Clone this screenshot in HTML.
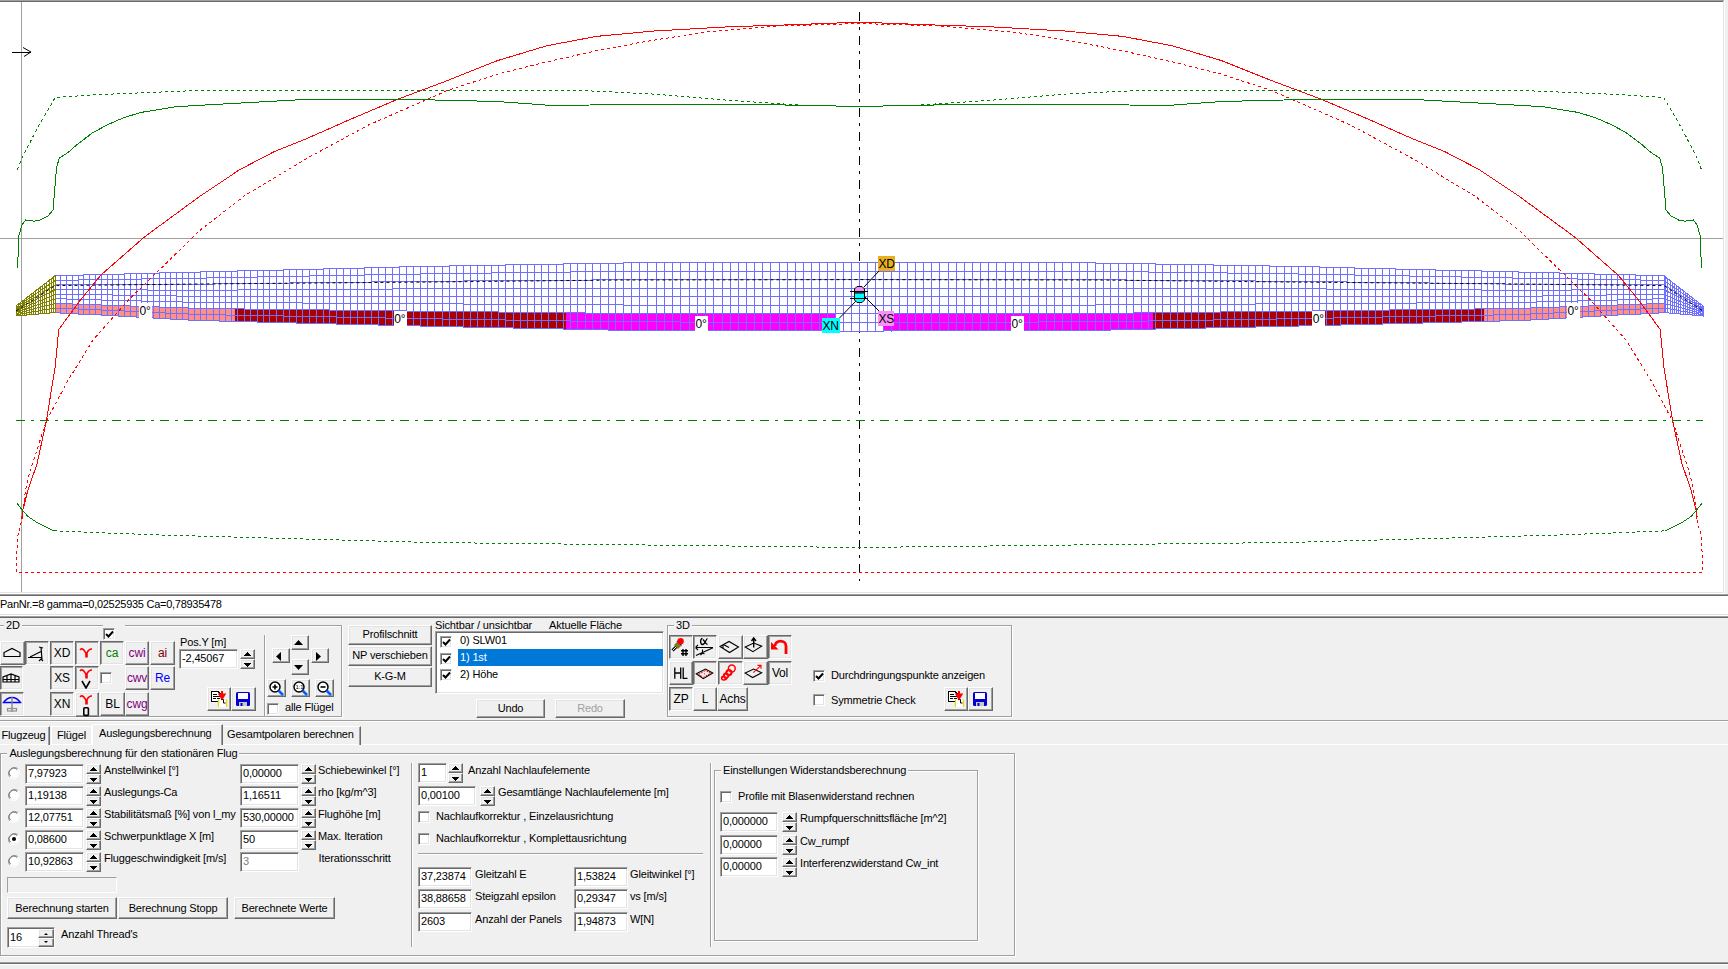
<!DOCTYPE html><html><head><meta charset="utf-8"><style>
*{margin:0;padding:0;box-sizing:border-box}
html,body{width:1728px;height:969px;overflow:hidden;background:#f0f0f0;font-family:"Liberation Sans",sans-serif;font-size:11px;line-height:13px;color:#000;position:relative;letter-spacing:-0.15px}
.t{position:absolute;white-space:pre;line-height:13px;letter-spacing:-0.15px}
.r{position:absolute}
.bt{position:absolute;background:#f0f0f0;border:1px solid;border-color:#fff #696969 #696969 #fff;box-shadow:inset -1px -1px #a0a0a0,inset 1px 1px #e3e3e3;text-align:center;white-space:pre}
.bs{position:absolute;background:#f0f0f0;border:1px solid;border-color:#696969 #fff #fff #696969;box-shadow:inset 1px 1px #a0a0a0,inset -1px -1px #e3e3e3;text-align:center;white-space:pre}
.ed{position:absolute;background:#fff;border:1px solid;border-color:#a0a0a0 #fff #fff #a0a0a0;box-shadow:inset 1px 1px #696969,inset -1px -1px #e3e3e3;white-space:pre;overflow:hidden}
.cb{position:absolute;background:#fff;border:1px solid;border-color:#a0a0a0 #fff #fff #a0a0a0;box-shadow:inset 1px 1px #696969,inset -1px -1px #e3e3e3}
.gb{position:absolute;border:1px solid #a0a0a0;box-shadow:1px 1px #fff, inset 1px 1px #fff}
.au,.ad{position:absolute;width:7px;height:4px}
.ic{position:absolute;left:0;top:0}
</style></head><body><div class="r" style="left:0px;top:0px;width:1728px;height:594px;background:#f0f0f0"></div>
<div class="r" style="left:0px;top:0px;width:1725px;height:594px;background:#fff"></div>
<svg width="1728" height="594" style="position:absolute;left:0;top:0">
<g shape-rendering="crispEdges">
<rect x="0" y="238" width="1723" height="1" fill="#a0a0a0"/>
<rect x="21" y="2" width="1" height="590" fill="#a0a0a0"/>
</g>
<path d="M859.5 12 V581" stroke="#000" stroke-width="1" fill="none" stroke-dasharray="9 6 3 6" shape-rendering="crispEdges"/>
<path d="M55.0 275.8 L200.0 272.0 L432.0 266.2 L620.0 263.0 L859.5 262.6 L1099.0 263.0 L1287.0 266.2 L1519.0 272.0 L1664.0 275.8 L1664.0 312.6 L1519.0 320.6 L1287.0 326.3 L1099.0 330.2 L859.5 331.1 L620.0 330.2 L432.0 326.3 L200.0 320.6 L55.0 312.6 Z" fill="#ffffff"/>
<path d="M55.0 303.4 L60.8 303.6 L66.6 303.8 L72.4 304.0 L78.2 304.2 L83.9 304.4 L89.7 304.6 L95.5 304.8 L101.3 305.0 L107.1 305.2 L112.9 305.4 L118.7 305.6 L124.5 305.8 L130.3 306.0 L136.0 306.2 L141.8 306.4 L147.6 306.6 L153.4 306.8 L159.2 307.0 L165.1 307.2 L170.9 307.4 L176.9 307.6 L182.8 307.8 L188.8 308.1 L194.8 308.3 L200.9 308.5 L207.0 308.5 L213.1 308.6 L219.3 308.7 L225.5 308.8 L231.7 308.8 L234.8 308.9 L234.8 321.5 L231.7 321.4 L225.5 321.2 L219.3 321.1 L213.1 320.9 L207.0 320.8 L200.9 320.6 L194.8 320.3 L188.8 320.0 L182.8 319.7 L176.9 319.3 L170.9 319.0 L165.1 318.7 L159.2 318.3 L153.4 318.0 L147.6 317.7 L141.8 317.4 L136.0 317.1 L130.3 316.8 L124.5 316.4 L118.7 316.1 L112.9 315.8 L107.1 315.5 L101.3 315.2 L95.5 314.8 L89.7 314.5 L83.9 314.2 L78.2 313.9 L72.4 313.6 L66.6 313.2 L60.8 312.9 L55.0 312.6 Z" fill="#ff9088"/>
<path d="M234.8 308.9 L238.0 308.9 L244.3 309.0 L250.7 309.1 L257.1 309.1 L263.5 309.2 L270.0 309.3 L276.5 309.4 L283.0 309.5 L289.6 309.5 L296.2 309.6 L302.9 309.7 L309.6 309.8 L316.4 309.9 L323.1 310.0 L330.0 310.0 L336.8 310.1 L343.8 310.2 L350.7 310.3 L357.7 310.4 L364.7 310.5 L371.7 310.5 L378.7 310.6 L385.7 310.7 L392.7 310.8 L399.8 310.9 L406.8 311.0 L413.8 311.1 L420.9 311.2 L427.9 311.2 L435.0 311.3 L442.1 311.4 L449.1 311.5 L456.2 311.6 L463.3 311.6 L470.4 311.7 L477.5 311.8 L484.6 311.9 L491.7 312.0 L498.8 312.0 L506.0 312.1 L513.1 312.2 L520.3 312.3 L527.4 312.4 L534.6 312.4 L541.7 312.5 L548.9 312.6 L556.1 312.7 L563.2 312.8 L566.0 312.8 L566.0 329.1 L563.2 329.0 L556.1 328.9 L548.9 328.7 L541.7 328.6 L534.6 328.4 L527.4 328.3 L520.3 328.1 L513.1 328.0 L506.0 327.8 L498.8 327.7 L491.7 327.5 L484.6 327.4 L477.5 327.2 L470.4 327.1 L463.3 326.9 L456.2 326.8 L449.1 326.7 L442.1 326.5 L435.0 326.4 L427.9 326.2 L420.9 326.0 L413.8 325.9 L406.8 325.7 L399.8 325.5 L392.7 325.3 L385.7 325.2 L378.7 325.0 L371.7 324.8 L364.7 324.6 L357.7 324.5 L350.7 324.3 L343.8 324.1 L336.8 324.0 L330.0 323.8 L323.1 323.6 L316.4 323.5 L309.6 323.3 L302.9 323.1 L296.2 323.0 L289.6 322.8 L283.0 322.6 L276.5 322.5 L270.0 322.3 L263.5 322.2 L257.1 322.0 L250.7 321.8 L244.3 321.7 L238.0 321.5 L234.8 321.5 Z" fill="#aa0000"/>
<path d="M566.0 312.8 L570.5 312.8 L577.8 312.9 L585.2 313.0 L592.7 313.1 L600.3 313.2 L608.0 313.3 L615.8 313.4 L623.7 313.4 L631.7 313.4 L639.7 313.4 L647.9 313.5 L656.2 313.5 L664.5 313.5 L672.7 313.5 L681.0 313.5 L689.2 313.6 L697.4 313.6 L705.6 313.6 L713.8 313.6 L722.0 313.6 L730.2 313.7 L738.4 313.7 L746.5 313.7 L754.7 313.7 L762.8 313.7 L770.9 313.8 L779.0 313.8 L787.1 313.8 L795.2 313.8 L803.3 313.8 L811.4 313.9 L819.4 313.9 L827.5 313.9 L835.5 313.9 L835.5 313.9 L835.5 331.0 L835.5 331.0 L827.5 331.0 L819.4 330.9 L811.4 330.9 L803.3 330.9 L795.2 330.9 L787.1 330.8 L779.0 330.8 L770.9 330.8 L762.8 330.7 L754.7 330.7 L746.5 330.7 L738.4 330.6 L730.2 330.6 L722.0 330.6 L713.8 330.6 L705.6 330.5 L697.4 330.5 L689.2 330.5 L681.0 330.4 L672.7 330.4 L664.5 330.4 L656.2 330.3 L647.9 330.3 L639.7 330.3 L631.7 330.2 L623.7 330.2 L615.8 330.1 L608.0 330.0 L600.3 329.8 L592.7 329.6 L585.2 329.5 L577.8 329.3 L570.5 329.2 L566.0 329.1 Z" fill="#ff00ff"/>
<path d="M1484.2 308.9 L1487.3 308.8 L1493.5 308.8 L1499.7 308.7 L1505.9 308.6 L1512.0 308.5 L1518.1 308.5 L1524.2 308.3 L1530.2 308.1 L1536.2 307.8 L1542.1 307.6 L1548.1 307.4 L1553.9 307.2 L1559.8 307.0 L1565.6 306.8 L1571.4 306.6 L1577.2 306.4 L1583.0 306.2 L1588.7 306.0 L1594.5 305.8 L1600.3 305.6 L1606.1 305.4 L1611.9 305.2 L1617.7 305.0 L1623.5 304.8 L1629.3 304.6 L1635.1 304.4 L1640.8 304.2 L1646.6 304.0 L1652.4 303.8 L1658.2 303.6 L1664.0 303.4 L1664.0 312.6 L1658.2 312.9 L1652.4 313.2 L1646.6 313.6 L1640.8 313.9 L1635.1 314.2 L1629.3 314.5 L1623.5 314.8 L1617.7 315.2 L1611.9 315.5 L1606.1 315.8 L1600.3 316.1 L1594.5 316.4 L1588.7 316.8 L1583.0 317.1 L1577.2 317.4 L1571.4 317.7 L1565.6 318.0 L1559.8 318.3 L1553.9 318.7 L1548.1 319.0 L1542.1 319.3 L1536.2 319.7 L1530.2 320.0 L1524.2 320.3 L1518.1 320.6 L1512.0 320.8 L1505.9 320.9 L1499.7 321.1 L1493.5 321.2 L1487.3 321.4 L1484.2 321.5 Z" fill="#ff9088"/>
<path d="M1153.0 312.8 L1155.8 312.8 L1162.9 312.7 L1170.1 312.6 L1177.3 312.5 L1184.4 312.4 L1191.6 312.4 L1198.7 312.3 L1205.9 312.2 L1213.0 312.1 L1220.2 312.0 L1227.3 312.0 L1234.4 311.9 L1241.5 311.8 L1248.6 311.7 L1255.7 311.6 L1262.8 311.6 L1269.9 311.5 L1276.9 311.4 L1284.0 311.3 L1291.1 311.2 L1298.1 311.2 L1305.2 311.1 L1312.2 311.0 L1319.2 310.9 L1326.3 310.8 L1333.3 310.7 L1340.3 310.6 L1347.3 310.5 L1354.3 310.5 L1361.3 310.4 L1368.3 310.3 L1375.2 310.2 L1382.2 310.1 L1389.0 310.0 L1395.9 310.0 L1402.6 309.9 L1409.4 309.8 L1416.1 309.7 L1422.8 309.6 L1429.4 309.5 L1436.0 309.5 L1442.5 309.4 L1449.0 309.3 L1455.5 309.2 L1461.9 309.1 L1468.3 309.1 L1474.7 309.0 L1481.0 308.9 L1484.2 308.9 L1484.2 321.5 L1481.0 321.5 L1474.7 321.7 L1468.3 321.8 L1461.9 322.0 L1455.5 322.2 L1449.0 322.3 L1442.5 322.5 L1436.0 322.6 L1429.4 322.8 L1422.8 323.0 L1416.1 323.1 L1409.4 323.3 L1402.6 323.5 L1395.9 323.6 L1389.0 323.8 L1382.2 324.0 L1375.2 324.1 L1368.3 324.3 L1361.3 324.5 L1354.3 324.6 L1347.3 324.8 L1340.3 325.0 L1333.3 325.2 L1326.3 325.3 L1319.2 325.5 L1312.2 325.7 L1305.2 325.9 L1298.1 326.0 L1291.1 326.2 L1284.0 326.4 L1276.9 326.5 L1269.9 326.7 L1262.8 326.8 L1255.7 326.9 L1248.6 327.1 L1241.5 327.2 L1234.4 327.4 L1227.3 327.5 L1220.2 327.7 L1213.0 327.8 L1205.9 328.0 L1198.7 328.1 L1191.6 328.3 L1184.4 328.4 L1177.3 328.6 L1170.1 328.7 L1162.9 328.9 L1155.8 329.0 L1153.0 329.1 Z" fill="#aa0000"/>
<path d="M883.5 313.9 L883.5 313.9 L891.5 313.9 L899.6 313.9 L907.6 313.9 L915.7 313.8 L923.8 313.8 L931.9 313.8 L940.0 313.8 L948.1 313.8 L956.2 313.7 L964.3 313.7 L972.5 313.7 L980.6 313.7 L988.8 313.7 L997.0 313.6 L1005.2 313.6 L1013.4 313.6 L1021.6 313.6 L1029.8 313.6 L1038.0 313.5 L1046.3 313.5 L1054.5 313.5 L1062.8 313.5 L1071.1 313.5 L1079.3 313.4 L1087.3 313.4 L1095.3 313.4 L1103.2 313.4 L1111.0 313.3 L1118.7 313.2 L1126.3 313.1 L1133.8 313.0 L1141.2 312.9 L1148.5 312.8 L1153.0 312.8 L1153.0 329.1 L1148.5 329.2 L1141.2 329.3 L1133.8 329.5 L1126.3 329.6 L1118.7 329.8 L1111.0 330.0 L1103.2 330.1 L1095.3 330.2 L1087.3 330.2 L1079.3 330.3 L1071.1 330.3 L1062.8 330.3 L1054.5 330.4 L1046.3 330.4 L1038.0 330.4 L1029.8 330.5 L1021.6 330.5 L1013.4 330.5 L1005.2 330.6 L997.0 330.6 L988.8 330.6 L980.6 330.6 L972.5 330.7 L964.3 330.7 L956.2 330.7 L948.1 330.8 L940.0 330.8 L931.9 330.8 L923.8 330.9 L915.7 330.9 L907.6 330.9 L899.6 330.9 L891.5 331.0 L883.5 331.0 L883.5 331.0 Z" fill="#ff00ff"/>
<path d="M54.5 275.8 V313.1 M60.5 275.6 V313.4 M66.5 275.5 V313.7 M72.5 275.3 V314.1 M78.5 275.2 V314.4 M83.5 275.0 V314.7 M89.5 274.9 V315.0 M95.5 274.7 V315.3 M101.5 274.6 V315.7 M107.5 274.4 V316.0 M112.5 274.3 V316.3 M118.5 274.1 V316.6 M124.5 274.0 V316.9 M130.5 273.8 V317.3 M136.5 273.7 V317.6 M141.5 273.5 V317.9 M147.5 273.4 V318.2 M153.5 273.2 V318.5 M159.5 273.1 V318.8 M165.5 272.9 V319.2 M170.5 272.8 V319.5 M176.5 272.6 V319.8 M182.5 272.4 V320.2 M188.5 272.3 V320.5 M194.5 272.1 V320.8 M200.5 272.0 V321.1 M206.5 271.8 V321.3 M213.5 271.7 V321.4 M219.5 271.5 V321.6 M225.5 271.4 V321.7 M231.5 271.2 V321.9 M237.5 271.1 V322.0 M244.5 270.9 V322.2 M250.5 270.7 V322.3 M257.5 270.6 V322.5 M263.5 270.4 V322.7 M269.5 270.3 V322.8 M276.5 270.1 V323.0 M283.5 269.9 V323.1 M289.5 269.8 V323.3 M296.5 269.6 V323.5 M302.5 269.4 V323.6 M309.5 269.3 V323.8 M316.5 269.1 V324.0 M323.5 268.9 V324.1 M329.5 268.8 V324.3 M336.5 268.6 V324.5 M343.5 268.4 V324.6 M350.5 268.3 V324.8 M357.5 268.1 V325.0 M364.5 267.9 V325.1 M371.5 267.7 V325.3 M378.5 267.6 V325.5 M385.5 267.4 V325.7 M392.5 267.2 V325.8 M399.5 267.0 V326.0 M406.5 266.9 V326.2 M413.5 266.7 V326.4 M420.5 266.5 V326.5 M427.5 266.4 V326.7 M434.5 266.2 V326.9 M442.5 266.1 V327.0 M449.5 266.0 V327.2 M456.5 265.8 V327.3 M463.5 265.7 V327.4 M470.5 265.6 V327.6 M477.5 265.5 V327.7 M484.5 265.3 V327.9 M491.5 265.2 V328.0 M498.5 265.1 V328.2 M505.5 265.0 V328.3 M513.5 264.8 V328.5 M520.5 264.7 V328.6 M527.5 264.6 V328.8 M534.5 264.5 V328.9 M541.5 264.4 V329.1 M548.5 264.2 V329.2 M556.5 264.1 V329.4 M563.5 264.0 V329.5 M570.5 263.9 V329.7 M577.5 263.7 V329.8 M585.5 263.6 V330.0 M592.5 263.5 V330.1 M600.5 263.3 V330.3 M608.5 263.2 V330.5 M615.5 263.1 V330.6 M623.5 263.0 V330.7 M631.5 263.0 V330.7 M639.5 263.0 V330.8 M647.5 263.0 V330.8 M656.5 262.9 V330.8 M664.5 262.9 V330.9 M672.5 262.9 V330.9 M680.5 262.9 V330.9 M689.5 262.9 V331.0 M697.5 262.9 V331.0 M705.5 262.9 V331.0 M713.5 262.8 V331.1 M722.5 262.8 V331.1 M730.5 262.8 V331.1 M738.5 262.8 V331.1 M746.5 262.8 V331.2 M754.5 262.8 V331.2 M762.5 262.8 V331.2 M770.5 262.7 V331.3 M779.5 262.7 V331.3 M787.5 262.7 V331.3 M795.5 262.7 V331.4 M803.5 262.7 V331.4 M811.5 262.7 V331.4 M819.5 262.7 V331.4 M827.5 262.7 V331.5 M835.5 262.6 V331.5 M843.5 262.6 V331.5 M851.5 262.6 V331.6 M859.5 262.6 V331.6 M867.5 262.6 V331.6 M875.5 262.6 V331.5 M883.5 262.6 V331.5 M891.5 262.7 V331.5 M899.5 262.7 V331.4 M907.5 262.7 V331.4 M915.5 262.7 V331.4 M923.5 262.7 V331.4 M931.5 262.7 V331.3 M939.5 262.7 V331.3 M948.5 262.7 V331.3 M956.5 262.8 V331.2 M964.5 262.8 V331.2 M972.5 262.8 V331.2 M980.5 262.8 V331.1 M988.5 262.8 V331.1 M996.5 262.8 V331.1 M1005.5 262.8 V331.1 M1013.5 262.9 V331.0 M1021.5 262.9 V331.0 M1029.5 262.9 V331.0 M1038.5 262.9 V330.9 M1046.5 262.9 V330.9 M1054.5 262.9 V330.9 M1062.5 262.9 V330.8 M1071.5 263.0 V330.8 M1079.5 263.0 V330.8 M1087.5 263.0 V330.7 M1095.5 263.0 V330.7 M1103.5 263.1 V330.6 M1110.5 263.2 V330.5 M1118.5 263.3 V330.3 M1126.5 263.5 V330.1 M1133.5 263.6 V330.0 M1141.5 263.7 V329.8 M1148.5 263.9 V329.7 M1155.5 264.0 V329.5 M1162.5 264.1 V329.4 M1170.5 264.2 V329.2 M1177.5 264.4 V329.1 M1184.5 264.5 V328.9 M1191.5 264.6 V328.8 M1198.5 264.7 V328.6 M1205.5 264.8 V328.5 M1213.5 265.0 V328.3 M1220.5 265.1 V328.2 M1227.5 265.2 V328.0 M1234.5 265.3 V327.9 M1241.5 265.5 V327.7 M1248.5 265.6 V327.6 M1255.5 265.7 V327.4 M1262.5 265.8 V327.3 M1269.5 266.0 V327.2 M1276.5 266.1 V327.0 M1284.5 266.2 V326.9 M1291.5 266.4 V326.7 M1298.5 266.5 V326.5 M1305.5 266.7 V326.4 M1312.5 266.9 V326.2 M1319.5 267.0 V326.0 M1326.5 267.2 V325.8 M1333.5 267.4 V325.7 M1340.5 267.6 V325.5 M1347.5 267.7 V325.3 M1354.5 267.9 V325.1 M1361.5 268.1 V325.0 M1368.5 268.3 V324.8 M1375.5 268.4 V324.6 M1382.5 268.6 V324.5 M1389.5 268.8 V324.3 M1395.5 268.9 V324.1 M1402.5 269.1 V324.0 M1409.5 269.3 V323.8 M1416.5 269.4 V323.6 M1422.5 269.6 V323.5 M1429.5 269.8 V323.3 M1435.5 269.9 V323.1 M1442.5 270.1 V323.0 M1449.5 270.3 V322.8 M1455.5 270.4 V322.7 M1461.5 270.6 V322.5 M1468.5 270.7 V322.3 M1474.5 270.9 V322.2 M1481.5 271.1 V322.0 M1487.5 271.2 V321.9 M1493.5 271.4 V321.7 M1499.5 271.5 V321.6 M1505.5 271.7 V321.4 M1512.5 271.8 V321.3 M1518.5 272.0 V321.1 M1524.5 272.1 V320.8 M1530.5 272.3 V320.5 M1536.5 272.4 V320.2 M1542.5 272.6 V319.8 M1548.5 272.8 V319.5 M1553.5 272.9 V319.2 M1559.5 273.1 V318.8 M1565.5 273.2 V318.5 M1571.5 273.4 V318.2 M1577.5 273.5 V317.9 M1582.5 273.7 V317.6 M1588.5 273.8 V317.3 M1594.5 274.0 V316.9 M1600.5 274.1 V316.6 M1606.5 274.3 V316.3 M1611.5 274.4 V316.0 M1617.5 274.6 V315.7 M1623.5 274.7 V315.3 M1629.5 274.9 V315.0 M1635.5 275.0 V314.7 M1640.5 275.2 V314.4 M1646.5 275.3 V314.1 M1652.5 275.5 V313.7 M1658.5 275.6 V313.4 M1664.5 275.8 V313.1 M54.0 275.5 H61.0 M60.0 275.5 H67.0 M66.0 275.5 H73.0 M72.0 275.5 H79.0 M78.0 275.5 H84.0 M83.0 274.5 H90.0 M89.0 274.5 H96.0 M95.0 274.5 H102.0 M101.0 274.5 H108.0 M107.0 274.5 H113.0 M112.0 274.5 H119.0 M118.0 274.5 H125.0 M124.0 273.5 H131.0 M130.0 273.5 H137.0 M136.0 273.5 H142.0 M141.0 273.5 H148.0 M147.0 273.5 H154.0 M153.0 273.5 H160.0 M159.0 272.5 H166.0 M165.0 272.5 H171.0 M170.0 272.5 H177.0 M176.0 272.5 H183.0 M182.0 272.5 H189.0 M188.0 272.5 H195.0 M194.0 272.5 H201.0 M200.0 271.5 H207.0 M206.0 271.5 H214.0 M213.0 271.5 H220.0 M219.0 271.5 H226.0 M225.0 271.5 H232.0 M231.0 271.5 H238.0 M237.0 270.5 H245.0 M244.0 270.5 H251.0 M250.0 270.5 H258.0 M257.0 270.5 H264.0 M263.0 270.5 H270.0 M269.0 270.5 H277.0 M276.0 270.5 H284.0 M283.0 269.5 H290.0 M289.0 269.5 H297.0 M296.0 269.5 H303.0 M302.0 269.5 H310.0 M309.0 269.5 H317.0 M316.0 269.5 H324.0 M323.0 268.5 H330.0 M329.0 268.5 H337.0 M336.0 268.5 H344.0 M343.0 268.5 H351.0 M350.0 268.5 H358.0 M357.0 268.5 H365.0 M364.0 267.5 H372.0 M371.0 267.5 H379.0 M378.0 267.5 H386.0 M385.0 267.5 H393.0 M392.0 267.5 H400.0 M399.0 266.5 H407.0 M406.0 266.5 H414.0 M413.0 266.5 H421.0 M420.0 266.5 H428.0 M427.0 266.5 H435.0 M434.0 266.5 H443.0 M442.0 266.5 H450.0 M449.0 265.5 H457.0 M456.0 265.5 H464.0 M463.0 265.5 H471.0 M470.0 265.5 H478.0 M477.0 265.5 H485.0 M484.0 265.5 H492.0 M491.0 265.5 H499.0 M498.0 265.5 H506.0 M505.0 264.5 H514.0 M513.0 264.5 H521.0 M520.0 264.5 H528.0 M527.0 264.5 H535.0 M534.0 264.5 H542.0 M541.0 264.5 H549.0 M548.0 264.5 H557.0 M556.0 264.5 H564.0 M563.0 263.5 H571.0 M570.0 263.5 H578.0 M577.0 263.5 H586.0 M585.0 263.5 H593.0 M592.0 263.5 H601.0 M600.0 263.5 H609.0 M608.0 263.5 H616.0 M615.0 263.5 H624.0 M623.0 262.5 H632.0 M631.0 262.5 H640.0 M639.0 262.5 H648.0 M647.0 262.5 H657.0 M656.0 262.5 H665.0 M664.0 262.5 H673.0 M672.0 262.5 H681.0 M680.0 262.5 H690.0 M689.0 262.5 H698.0 M697.0 262.5 H706.0 M705.0 262.5 H714.0 M713.0 262.5 H723.0 M722.0 262.5 H731.0 M730.0 262.5 H739.0 M738.0 262.5 H747.0 M746.0 262.5 H755.0 M754.0 262.5 H763.0 M762.0 262.5 H771.0 M770.0 262.5 H780.0 M779.0 262.5 H788.0 M787.0 262.5 H796.0 M795.0 262.5 H804.0 M803.0 262.5 H812.0 M811.0 262.5 H820.0 M819.0 262.5 H828.0 M827.0 262.5 H836.0 M835.0 262.5 H844.0 M843.0 262.5 H852.0 M851.0 262.5 H860.0 M859.0 262.5 H868.0 M867.0 262.5 H876.0 M875.0 262.5 H884.0 M883.0 262.5 H892.0 M891.0 262.5 H900.0 M899.0 262.5 H908.0 M907.0 262.5 H916.0 M915.0 262.5 H924.0 M923.0 262.5 H932.0 M931.0 262.5 H940.0 M939.0 262.5 H949.0 M948.0 262.5 H957.0 M956.0 262.5 H965.0 M964.0 262.5 H973.0 M972.0 262.5 H981.0 M980.0 262.5 H989.0 M988.0 262.5 H997.0 M996.0 262.5 H1006.0 M1005.0 262.5 H1014.0 M1013.0 262.5 H1022.0 M1021.0 262.5 H1030.0 M1029.0 262.5 H1039.0 M1038.0 262.5 H1047.0 M1046.0 262.5 H1055.0 M1054.0 262.5 H1063.0 M1062.0 262.5 H1072.0 M1071.0 262.5 H1080.0 M1079.0 262.5 H1088.0 M1087.0 262.5 H1096.0 M1095.0 263.5 H1104.0 M1103.0 263.5 H1111.0 M1110.0 263.5 H1119.0 M1118.0 263.5 H1127.0 M1126.0 263.5 H1134.0 M1133.0 263.5 H1142.0 M1141.0 263.5 H1149.0 M1148.0 263.5 H1156.0 M1155.0 264.5 H1163.0 M1162.0 264.5 H1171.0 M1170.0 264.5 H1178.0 M1177.0 264.5 H1185.0 M1184.0 264.5 H1192.0 M1191.0 264.5 H1199.0 M1198.0 264.5 H1206.0 M1205.0 264.5 H1214.0 M1213.0 265.5 H1221.0 M1220.0 265.5 H1228.0 M1227.0 265.5 H1235.0 M1234.0 265.5 H1242.0 M1241.0 265.5 H1249.0 M1248.0 265.5 H1256.0 M1255.0 265.5 H1263.0 M1262.0 265.5 H1270.0 M1269.0 266.5 H1277.0 M1276.0 266.5 H1285.0 M1284.0 266.5 H1292.0 M1291.0 266.5 H1299.0 M1298.0 266.5 H1306.0 M1305.0 266.5 H1313.0 M1312.0 266.5 H1320.0 M1319.0 267.5 H1327.0 M1326.0 267.5 H1334.0 M1333.0 267.5 H1341.0 M1340.0 267.5 H1348.0 M1347.0 267.5 H1355.0 M1354.0 268.5 H1362.0 M1361.0 268.5 H1369.0 M1368.0 268.5 H1376.0 M1375.0 268.5 H1383.0 M1382.0 268.5 H1390.0 M1389.0 268.5 H1396.0 M1395.0 269.5 H1403.0 M1402.0 269.5 H1410.0 M1409.0 269.5 H1417.0 M1416.0 269.5 H1423.0 M1422.0 269.5 H1430.0 M1429.0 269.5 H1436.0 M1435.0 270.5 H1443.0 M1442.0 270.5 H1450.0 M1449.0 270.5 H1456.0 M1455.0 270.5 H1462.0 M1461.0 270.5 H1469.0 M1468.0 270.5 H1475.0 M1474.0 270.5 H1482.0 M1481.0 271.5 H1488.0 M1487.0 271.5 H1494.0 M1493.0 271.5 H1500.0 M1499.0 271.5 H1506.0 M1505.0 271.5 H1513.0 M1512.0 271.5 H1519.0 M1518.0 272.5 H1525.0 M1524.0 272.5 H1531.0 M1530.0 272.5 H1537.0 M1536.0 272.5 H1543.0 M1542.0 272.5 H1549.0 M1548.0 272.5 H1554.0 M1553.0 272.5 H1560.0 M1559.0 273.5 H1566.0 M1565.0 273.5 H1572.0 M1571.0 273.5 H1578.0 M1577.0 273.5 H1583.0 M1582.0 273.5 H1589.0 M1588.0 273.5 H1595.0 M1594.0 274.5 H1601.0 M1600.0 274.5 H1607.0 M1606.0 274.5 H1612.0 M1611.0 274.5 H1618.0 M1617.0 274.5 H1624.0 M1623.0 274.5 H1630.0 M1629.0 274.5 H1636.0 M1635.0 275.5 H1641.0 M1640.0 275.5 H1647.0 M1646.0 275.5 H1653.0 M1652.0 275.5 H1659.0 M1658.0 275.5 H1665.0 M54.0 280.5 H61.0 M60.0 280.5 H67.0 M66.0 280.5 H73.0 M72.0 280.5 H79.0 M78.0 279.5 H84.0 M83.0 279.5 H90.0 M89.0 279.5 H96.0 M95.0 279.5 H102.0 M101.0 279.5 H108.0 M107.0 279.5 H113.0 M112.0 279.5 H119.0 M118.0 279.5 H125.0 M124.0 279.5 H131.0 M130.0 279.5 H137.0 M136.0 279.5 H142.0 M141.0 278.5 H148.0 M147.0 278.5 H154.0 M153.0 278.5 H160.0 M159.0 278.5 H166.0 M165.0 278.5 H171.0 M170.0 278.5 H177.0 M176.0 278.5 H183.0 M182.0 278.5 H189.0 M188.0 278.5 H195.0 M194.0 278.5 H201.0 M200.0 278.5 H207.0 M206.0 277.5 H214.0 M213.0 277.5 H220.0 M219.0 277.5 H226.0 M225.0 277.5 H232.0 M231.0 277.5 H238.0 M237.0 277.5 H245.0 M244.0 277.5 H251.0 M250.0 277.5 H258.0 M257.0 276.5 H264.0 M263.0 276.5 H270.0 M269.0 276.5 H277.0 M276.0 276.5 H284.0 M283.0 276.5 H290.0 M289.0 276.5 H297.0 M296.0 276.5 H303.0 M302.0 276.5 H310.0 M309.0 275.5 H317.0 M316.0 275.5 H324.0 M323.0 275.5 H330.0 M329.0 275.5 H337.0 M336.0 275.5 H344.0 M343.0 275.5 H351.0 M350.0 275.5 H358.0 M357.0 275.5 H365.0 M364.0 274.5 H372.0 M371.0 274.5 H379.0 M378.0 274.5 H386.0 M385.0 274.5 H393.0 M392.0 274.5 H400.0 M399.0 274.5 H407.0 M406.0 274.5 H414.0 M413.0 274.5 H421.0 M420.0 273.5 H428.0 M427.0 273.5 H435.0 M434.0 273.5 H443.0 M442.0 273.5 H450.0 M449.0 273.5 H457.0 M456.0 273.5 H464.0 M463.0 273.5 H471.0 M470.0 273.5 H478.0 M477.0 273.5 H485.0 M484.0 273.5 H492.0 M491.0 272.5 H499.0 M498.0 272.5 H506.0 M505.0 272.5 H514.0 M513.0 272.5 H521.0 M520.0 272.5 H528.0 M527.0 272.5 H535.0 M534.0 272.5 H542.0 M541.0 272.5 H549.0 M548.0 272.5 H557.0 M556.0 272.5 H564.0 M563.0 272.5 H571.0 M570.0 271.5 H578.0 M577.0 271.5 H586.0 M585.0 271.5 H593.0 M592.0 271.5 H601.0 M600.0 271.5 H609.0 M608.0 271.5 H616.0 M615.0 271.5 H624.0 M623.0 271.5 H632.0 M631.0 271.5 H640.0 M639.0 271.5 H648.0 M647.0 271.5 H657.0 M656.0 271.5 H665.0 M664.0 271.5 H673.0 M672.0 271.5 H681.0 M680.0 271.5 H690.0 M689.0 271.5 H698.0 M697.0 271.5 H706.0 M705.0 271.5 H714.0 M713.0 271.5 H723.0 M722.0 271.5 H731.0 M730.0 271.5 H739.0 M738.0 271.5 H747.0 M746.0 271.5 H755.0 M754.0 271.5 H763.0 M762.0 271.5 H771.0 M770.0 271.5 H780.0 M779.0 271.5 H788.0 M787.0 271.5 H796.0 M795.0 271.5 H804.0 M803.0 271.5 H812.0 M811.0 271.5 H820.0 M819.0 271.5 H828.0 M827.0 271.5 H836.0 M835.0 271.5 H844.0 M843.0 271.5 H852.0 M851.0 271.5 H860.0 M859.0 271.5 H868.0 M867.0 271.5 H876.0 M875.0 271.5 H884.0 M883.0 271.5 H892.0 M891.0 271.5 H900.0 M899.0 271.5 H908.0 M907.0 271.5 H916.0 M915.0 271.5 H924.0 M923.0 271.5 H932.0 M931.0 271.5 H940.0 M939.0 271.5 H949.0 M948.0 271.5 H957.0 M956.0 271.5 H965.0 M964.0 271.5 H973.0 M972.0 271.5 H981.0 M980.0 271.5 H989.0 M988.0 271.5 H997.0 M996.0 271.5 H1006.0 M1005.0 271.5 H1014.0 M1013.0 271.5 H1022.0 M1021.0 271.5 H1030.0 M1029.0 271.5 H1039.0 M1038.0 271.5 H1047.0 M1046.0 271.5 H1055.0 M1054.0 271.5 H1063.0 M1062.0 271.5 H1072.0 M1071.0 271.5 H1080.0 M1079.0 271.5 H1088.0 M1087.0 271.5 H1096.0 M1095.0 271.5 H1104.0 M1103.0 271.5 H1111.0 M1110.0 271.5 H1119.0 M1118.0 271.5 H1127.0 M1126.0 271.5 H1134.0 M1133.0 271.5 H1142.0 M1141.0 271.5 H1149.0 M1148.0 272.5 H1156.0 M1155.0 272.5 H1163.0 M1162.0 272.5 H1171.0 M1170.0 272.5 H1178.0 M1177.0 272.5 H1185.0 M1184.0 272.5 H1192.0 M1191.0 272.5 H1199.0 M1198.0 272.5 H1206.0 M1205.0 272.5 H1214.0 M1213.0 272.5 H1221.0 M1220.0 272.5 H1228.0 M1227.0 273.5 H1235.0 M1234.0 273.5 H1242.0 M1241.0 273.5 H1249.0 M1248.0 273.5 H1256.0 M1255.0 273.5 H1263.0 M1262.0 273.5 H1270.0 M1269.0 273.5 H1277.0 M1276.0 273.5 H1285.0 M1284.0 273.5 H1292.0 M1291.0 273.5 H1299.0 M1298.0 274.5 H1306.0 M1305.0 274.5 H1313.0 M1312.0 274.5 H1320.0 M1319.0 274.5 H1327.0 M1326.0 274.5 H1334.0 M1333.0 274.5 H1341.0 M1340.0 274.5 H1348.0 M1347.0 274.5 H1355.0 M1354.0 275.5 H1362.0 M1361.0 275.5 H1369.0 M1368.0 275.5 H1376.0 M1375.0 275.5 H1383.0 M1382.0 275.5 H1390.0 M1389.0 275.5 H1396.0 M1395.0 275.5 H1403.0 M1402.0 275.5 H1410.0 M1409.0 276.5 H1417.0 M1416.0 276.5 H1423.0 M1422.0 276.5 H1430.0 M1429.0 276.5 H1436.0 M1435.0 276.5 H1443.0 M1442.0 276.5 H1450.0 M1449.0 276.5 H1456.0 M1455.0 276.5 H1462.0 M1461.0 277.5 H1469.0 M1468.0 277.5 H1475.0 M1474.0 277.5 H1482.0 M1481.0 277.5 H1488.0 M1487.0 277.5 H1494.0 M1493.0 277.5 H1500.0 M1499.0 277.5 H1506.0 M1505.0 277.5 H1513.0 M1512.0 278.5 H1519.0 M1518.0 278.5 H1525.0 M1524.0 278.5 H1531.0 M1530.0 278.5 H1537.0 M1536.0 278.5 H1543.0 M1542.0 278.5 H1549.0 M1548.0 278.5 H1554.0 M1553.0 278.5 H1560.0 M1559.0 278.5 H1566.0 M1565.0 278.5 H1572.0 M1571.0 278.5 H1578.0 M1577.0 279.5 H1583.0 M1582.0 279.5 H1589.0 M1588.0 279.5 H1595.0 M1594.0 279.5 H1601.0 M1600.0 279.5 H1607.0 M1606.0 279.5 H1612.0 M1611.0 279.5 H1618.0 M1617.0 279.5 H1624.0 M1623.0 279.5 H1630.0 M1629.0 279.5 H1636.0 M1635.0 279.5 H1641.0 M1640.0 280.5 H1647.0 M1646.0 280.5 H1653.0 M1652.0 280.5 H1659.0 M1658.0 280.5 H1665.0 M54.0 284.5 H61.0 M60.0 284.5 H67.0 M66.0 284.5 H73.0 M72.0 284.5 H79.0 M78.0 284.5 H84.0 M83.0 284.5 H90.0 M89.0 284.5 H96.0 M95.0 284.5 H102.0 M101.0 284.5 H108.0 M107.0 284.5 H113.0 M112.0 284.5 H119.0 M118.0 284.5 H125.0 M124.0 284.5 H131.0 M130.0 284.5 H137.0 M136.0 284.5 H142.0 M141.0 284.5 H148.0 M147.0 284.5 H154.0 M153.0 284.5 H160.0 M159.0 284.5 H166.0 M165.0 284.5 H171.0 M170.0 284.5 H177.0 M176.0 284.5 H183.0 M182.0 284.5 H189.0 M188.0 284.5 H195.0 M194.0 284.5 H201.0 M200.0 284.5 H207.0 M206.0 284.5 H214.0 M213.0 283.5 H220.0 M219.0 283.5 H226.0 M225.0 283.5 H232.0 M231.0 283.5 H238.0 M237.0 283.5 H245.0 M244.0 283.5 H251.0 M250.0 283.5 H258.0 M257.0 283.5 H264.0 M263.0 283.5 H270.0 M269.0 283.5 H277.0 M276.0 283.5 H284.0 M283.0 283.5 H290.0 M289.0 282.5 H297.0 M296.0 282.5 H303.0 M302.0 282.5 H310.0 M309.0 282.5 H317.0 M316.0 282.5 H324.0 M323.0 282.5 H330.0 M329.0 282.5 H337.0 M336.0 282.5 H344.0 M343.0 282.5 H351.0 M350.0 282.5 H358.0 M357.0 282.5 H365.0 M364.0 282.5 H372.0 M371.0 281.5 H379.0 M378.0 281.5 H386.0 M385.0 281.5 H393.0 M392.0 281.5 H400.0 M399.0 281.5 H407.0 M406.0 281.5 H414.0 M413.0 281.5 H421.0 M420.0 281.5 H428.0 M427.0 281.5 H435.0 M434.0 281.5 H443.0 M442.0 281.5 H450.0 M449.0 281.5 H457.0 M456.0 281.5 H464.0 M463.0 280.5 H471.0 M470.0 280.5 H478.0 M477.0 280.5 H485.0 M484.0 280.5 H492.0 M491.0 280.5 H499.0 M498.0 280.5 H506.0 M505.0 280.5 H514.0 M513.0 280.5 H521.0 M520.0 280.5 H528.0 M527.0 280.5 H535.0 M534.0 280.5 H542.0 M541.0 280.5 H549.0 M548.0 280.5 H557.0 M556.0 280.5 H564.0 M563.0 280.5 H571.0 M570.0 280.5 H578.0 M577.0 280.5 H586.0 M585.0 280.5 H593.0 M592.0 279.5 H601.0 M600.0 279.5 H609.0 M608.0 279.5 H616.0 M615.0 279.5 H624.0 M623.0 279.5 H632.0 M631.0 279.5 H640.0 M639.0 279.5 H648.0 M647.0 279.5 H657.0 M656.0 279.5 H665.0 M664.0 279.5 H673.0 M672.0 279.5 H681.0 M680.0 279.5 H690.0 M689.0 279.5 H698.0 M697.0 279.5 H706.0 M705.0 279.5 H714.0 M713.0 279.5 H723.0 M722.0 279.5 H731.0 M730.0 279.5 H739.0 M738.0 279.5 H747.0 M746.0 279.5 H755.0 M754.0 279.5 H763.0 M762.0 279.5 H771.0 M770.0 279.5 H780.0 M779.0 279.5 H788.0 M787.0 279.5 H796.0 M795.0 279.5 H804.0 M803.0 279.5 H812.0 M811.0 279.5 H820.0 M819.0 279.5 H828.0 M827.0 279.5 H836.0 M835.0 279.5 H844.0 M843.0 279.5 H852.0 M851.0 279.5 H860.0 M859.0 279.5 H868.0 M867.0 279.5 H876.0 M875.0 279.5 H884.0 M883.0 279.5 H892.0 M891.0 279.5 H900.0 M899.0 279.5 H908.0 M907.0 279.5 H916.0 M915.0 279.5 H924.0 M923.0 279.5 H932.0 M931.0 279.5 H940.0 M939.0 279.5 H949.0 M948.0 279.5 H957.0 M956.0 279.5 H965.0 M964.0 279.5 H973.0 M972.0 279.5 H981.0 M980.0 279.5 H989.0 M988.0 279.5 H997.0 M996.0 279.5 H1006.0 M1005.0 279.5 H1014.0 M1013.0 279.5 H1022.0 M1021.0 279.5 H1030.0 M1029.0 279.5 H1039.0 M1038.0 279.5 H1047.0 M1046.0 279.5 H1055.0 M1054.0 279.5 H1063.0 M1062.0 279.5 H1072.0 M1071.0 279.5 H1080.0 M1079.0 279.5 H1088.0 M1087.0 279.5 H1096.0 M1095.0 279.5 H1104.0 M1103.0 279.5 H1111.0 M1110.0 279.5 H1119.0 M1118.0 279.5 H1127.0 M1126.0 280.5 H1134.0 M1133.0 280.5 H1142.0 M1141.0 280.5 H1149.0 M1148.0 280.5 H1156.0 M1155.0 280.5 H1163.0 M1162.0 280.5 H1171.0 M1170.0 280.5 H1178.0 M1177.0 280.5 H1185.0 M1184.0 280.5 H1192.0 M1191.0 280.5 H1199.0 M1198.0 280.5 H1206.0 M1205.0 280.5 H1214.0 M1213.0 280.5 H1221.0 M1220.0 280.5 H1228.0 M1227.0 280.5 H1235.0 M1234.0 280.5 H1242.0 M1241.0 280.5 H1249.0 M1248.0 280.5 H1256.0 M1255.0 281.5 H1263.0 M1262.0 281.5 H1270.0 M1269.0 281.5 H1277.0 M1276.0 281.5 H1285.0 M1284.0 281.5 H1292.0 M1291.0 281.5 H1299.0 M1298.0 281.5 H1306.0 M1305.0 281.5 H1313.0 M1312.0 281.5 H1320.0 M1319.0 281.5 H1327.0 M1326.0 281.5 H1334.0 M1333.0 281.5 H1341.0 M1340.0 281.5 H1348.0 M1347.0 282.5 H1355.0 M1354.0 282.5 H1362.0 M1361.0 282.5 H1369.0 M1368.0 282.5 H1376.0 M1375.0 282.5 H1383.0 M1382.0 282.5 H1390.0 M1389.0 282.5 H1396.0 M1395.0 282.5 H1403.0 M1402.0 282.5 H1410.0 M1409.0 282.5 H1417.0 M1416.0 282.5 H1423.0 M1422.0 282.5 H1430.0 M1429.0 283.5 H1436.0 M1435.0 283.5 H1443.0 M1442.0 283.5 H1450.0 M1449.0 283.5 H1456.0 M1455.0 283.5 H1462.0 M1461.0 283.5 H1469.0 M1468.0 283.5 H1475.0 M1474.0 283.5 H1482.0 M1481.0 283.5 H1488.0 M1487.0 283.5 H1494.0 M1493.0 283.5 H1500.0 M1499.0 283.5 H1506.0 M1505.0 284.5 H1513.0 M1512.0 284.5 H1519.0 M1518.0 284.5 H1525.0 M1524.0 284.5 H1531.0 M1530.0 284.5 H1537.0 M1536.0 284.5 H1543.0 M1542.0 284.5 H1549.0 M1548.0 284.5 H1554.0 M1553.0 284.5 H1560.0 M1559.0 284.5 H1566.0 M1565.0 284.5 H1572.0 M1571.0 284.5 H1578.0 M1577.0 284.5 H1583.0 M1582.0 284.5 H1589.0 M1588.0 284.5 H1595.0 M1594.0 284.5 H1601.0 M1600.0 284.5 H1607.0 M1606.0 284.5 H1612.0 M1611.0 284.5 H1618.0 M1617.0 284.5 H1624.0 M1623.0 284.5 H1630.0 M1629.0 284.5 H1636.0 M1635.0 284.5 H1641.0 M1640.0 284.5 H1647.0 M1646.0 284.5 H1653.0 M1652.0 284.5 H1659.0 M1658.0 284.5 H1665.0 M54.0 289.5 H61.0 M60.0 289.5 H67.0 M66.0 289.5 H73.0 M72.0 289.5 H79.0 M78.0 289.5 H84.0 M83.0 289.5 H90.0 M89.0 289.5 H96.0 M95.0 289.5 H102.0 M101.0 289.5 H108.0 M107.0 289.5 H113.0 M112.0 289.5 H119.0 M118.0 289.5 H125.0 M124.0 289.5 H131.0 M130.0 289.5 H137.0 M136.0 289.5 H142.0 M141.0 289.5 H148.0 M147.0 290.5 H154.0 M153.0 290.5 H160.0 M159.0 290.5 H166.0 M165.0 290.5 H171.0 M170.0 290.5 H177.0 M176.0 290.5 H183.0 M182.0 290.5 H189.0 M188.0 290.5 H195.0 M194.0 290.5 H201.0 M200.0 290.5 H207.0 M206.0 290.5 H214.0 M213.0 290.5 H220.0 M219.0 290.5 H226.0 M225.0 290.5 H232.0 M231.0 290.5 H238.0 M237.0 289.5 H245.0 M244.0 289.5 H251.0 M250.0 289.5 H258.0 M257.0 289.5 H264.0 M263.0 289.5 H270.0 M269.0 289.5 H277.0 M276.0 289.5 H284.0 M283.0 289.5 H290.0 M289.0 289.5 H297.0 M296.0 289.5 H303.0 M302.0 289.5 H310.0 M309.0 289.5 H317.0 M316.0 289.5 H324.0 M323.0 289.5 H330.0 M329.0 289.5 H337.0 M336.0 289.5 H344.0 M343.0 289.5 H351.0 M350.0 289.5 H358.0 M357.0 289.5 H365.0 M364.0 289.5 H372.0 M371.0 289.5 H379.0 M378.0 289.5 H386.0 M385.0 289.5 H393.0 M392.0 288.5 H400.0 M399.0 288.5 H407.0 M406.0 288.5 H414.0 M413.0 288.5 H421.0 M420.0 288.5 H428.0 M427.0 288.5 H435.0 M434.0 288.5 H443.0 M442.0 288.5 H450.0 M449.0 288.5 H457.0 M456.0 288.5 H464.0 M463.0 288.5 H471.0 M470.0 288.5 H478.0 M477.0 288.5 H485.0 M484.0 288.5 H492.0 M491.0 288.5 H499.0 M498.0 288.5 H506.0 M505.0 288.5 H514.0 M513.0 288.5 H521.0 M520.0 288.5 H528.0 M527.0 288.5 H535.0 M534.0 288.5 H542.0 M541.0 288.5 H549.0 M548.0 288.5 H557.0 M556.0 288.5 H564.0 M563.0 288.5 H571.0 M570.0 288.5 H578.0 M577.0 288.5 H586.0 M585.0 288.5 H593.0 M592.0 288.5 H601.0 M600.0 288.5 H609.0 M608.0 288.5 H616.0 M615.0 288.5 H624.0 M623.0 288.5 H632.0 M631.0 288.5 H640.0 M639.0 288.5 H648.0 M647.0 288.5 H657.0 M656.0 288.5 H665.0 M664.0 288.5 H673.0 M672.0 288.5 H681.0 M680.0 288.5 H690.0 M689.0 288.5 H698.0 M697.0 288.5 H706.0 M705.0 288.5 H714.0 M713.0 288.5 H723.0 M722.0 288.5 H731.0 M730.0 288.5 H739.0 M738.0 288.5 H747.0 M746.0 288.5 H755.0 M754.0 288.5 H763.0 M762.0 288.5 H771.0 M770.0 288.5 H780.0 M779.0 288.5 H788.0 M787.0 288.5 H796.0 M795.0 288.5 H804.0 M803.0 288.5 H812.0 M811.0 288.5 H820.0 M819.0 288.5 H828.0 M827.0 288.5 H836.0 M835.0 288.5 H844.0 M843.0 288.5 H852.0 M851.0 288.5 H860.0 M859.0 288.5 H868.0 M867.0 288.5 H876.0 M875.0 288.5 H884.0 M883.0 288.5 H892.0 M891.0 288.5 H900.0 M899.0 288.5 H908.0 M907.0 288.5 H916.0 M915.0 288.5 H924.0 M923.0 288.5 H932.0 M931.0 288.5 H940.0 M939.0 288.5 H949.0 M948.0 288.5 H957.0 M956.0 288.5 H965.0 M964.0 288.5 H973.0 M972.0 288.5 H981.0 M980.0 288.5 H989.0 M988.0 288.5 H997.0 M996.0 288.5 H1006.0 M1005.0 288.5 H1014.0 M1013.0 288.5 H1022.0 M1021.0 288.5 H1030.0 M1029.0 288.5 H1039.0 M1038.0 288.5 H1047.0 M1046.0 288.5 H1055.0 M1054.0 288.5 H1063.0 M1062.0 288.5 H1072.0 M1071.0 288.5 H1080.0 M1079.0 288.5 H1088.0 M1087.0 288.5 H1096.0 M1095.0 288.5 H1104.0 M1103.0 288.5 H1111.0 M1110.0 288.5 H1119.0 M1118.0 288.5 H1127.0 M1126.0 288.5 H1134.0 M1133.0 288.5 H1142.0 M1141.0 288.5 H1149.0 M1148.0 288.5 H1156.0 M1155.0 288.5 H1163.0 M1162.0 288.5 H1171.0 M1170.0 288.5 H1178.0 M1177.0 288.5 H1185.0 M1184.0 288.5 H1192.0 M1191.0 288.5 H1199.0 M1198.0 288.5 H1206.0 M1205.0 288.5 H1214.0 M1213.0 288.5 H1221.0 M1220.0 288.5 H1228.0 M1227.0 288.5 H1235.0 M1234.0 288.5 H1242.0 M1241.0 288.5 H1249.0 M1248.0 288.5 H1256.0 M1255.0 288.5 H1263.0 M1262.0 288.5 H1270.0 M1269.0 288.5 H1277.0 M1276.0 288.5 H1285.0 M1284.0 288.5 H1292.0 M1291.0 288.5 H1299.0 M1298.0 288.5 H1306.0 M1305.0 288.5 H1313.0 M1312.0 288.5 H1320.0 M1319.0 288.5 H1327.0 M1326.0 289.5 H1334.0 M1333.0 289.5 H1341.0 M1340.0 289.5 H1348.0 M1347.0 289.5 H1355.0 M1354.0 289.5 H1362.0 M1361.0 289.5 H1369.0 M1368.0 289.5 H1376.0 M1375.0 289.5 H1383.0 M1382.0 289.5 H1390.0 M1389.0 289.5 H1396.0 M1395.0 289.5 H1403.0 M1402.0 289.5 H1410.0 M1409.0 289.5 H1417.0 M1416.0 289.5 H1423.0 M1422.0 289.5 H1430.0 M1429.0 289.5 H1436.0 M1435.0 289.5 H1443.0 M1442.0 289.5 H1450.0 M1449.0 289.5 H1456.0 M1455.0 289.5 H1462.0 M1461.0 289.5 H1469.0 M1468.0 289.5 H1475.0 M1474.0 289.5 H1482.0 M1481.0 290.5 H1488.0 M1487.0 290.5 H1494.0 M1493.0 290.5 H1500.0 M1499.0 290.5 H1506.0 M1505.0 290.5 H1513.0 M1512.0 290.5 H1519.0 M1518.0 290.5 H1525.0 M1524.0 290.5 H1531.0 M1530.0 290.5 H1537.0 M1536.0 290.5 H1543.0 M1542.0 290.5 H1549.0 M1548.0 290.5 H1554.0 M1553.0 290.5 H1560.0 M1559.0 290.5 H1566.0 M1565.0 290.5 H1572.0 M1571.0 289.5 H1578.0 M1577.0 289.5 H1583.0 M1582.0 289.5 H1589.0 M1588.0 289.5 H1595.0 M1594.0 289.5 H1601.0 M1600.0 289.5 H1607.0 M1606.0 289.5 H1612.0 M1611.0 289.5 H1618.0 M1617.0 289.5 H1624.0 M1623.0 289.5 H1630.0 M1629.0 289.5 H1636.0 M1635.0 289.5 H1641.0 M1640.0 289.5 H1647.0 M1646.0 289.5 H1653.0 M1652.0 289.5 H1659.0 M1658.0 289.5 H1665.0 M54.0 294.5 H61.0 M60.0 294.5 H67.0 M66.0 294.5 H73.0 M72.0 294.5 H79.0 M78.0 294.5 H84.0 M83.0 294.5 H90.0 M89.0 294.5 H96.0 M95.0 294.5 H102.0 M101.0 294.5 H108.0 M107.0 294.5 H113.0 M112.0 295.5 H119.0 M118.0 295.5 H125.0 M124.0 295.5 H131.0 M130.0 295.5 H137.0 M136.0 295.5 H142.0 M141.0 295.5 H148.0 M147.0 295.5 H154.0 M153.0 295.5 H160.0 M159.0 295.5 H166.0 M165.0 295.5 H171.0 M170.0 295.5 H177.0 M176.0 296.5 H183.0 M182.0 296.5 H189.0 M188.0 296.5 H195.0 M194.0 296.5 H201.0 M200.0 296.5 H207.0 M206.0 296.5 H214.0 M213.0 296.5 H220.0 M219.0 296.5 H226.0 M225.0 296.5 H232.0 M231.0 296.5 H238.0 M237.0 296.5 H245.0 M244.0 296.5 H251.0 M250.0 296.5 H258.0 M257.0 296.5 H264.0 M263.0 296.5 H270.0 M269.0 296.5 H277.0 M276.0 296.5 H284.0 M283.0 296.5 H290.0 M289.0 296.5 H297.0 M296.0 296.5 H303.0 M302.0 296.5 H310.0 M309.0 296.5 H317.0 M316.0 296.5 H324.0 M323.0 296.5 H330.0 M329.0 296.5 H337.0 M336.0 296.5 H344.0 M343.0 296.5 H351.0 M350.0 296.5 H358.0 M357.0 296.5 H365.0 M364.0 296.5 H372.0 M371.0 296.5 H379.0 M378.0 296.5 H386.0 M385.0 296.5 H393.0 M392.0 296.5 H400.0 M399.0 296.5 H407.0 M406.0 296.5 H414.0 M413.0 296.5 H421.0 M420.0 296.5 H428.0 M427.0 296.5 H435.0 M434.0 296.5 H443.0 M442.0 296.5 H450.0 M449.0 296.5 H457.0 M456.0 296.5 H464.0 M463.0 296.5 H471.0 M470.0 296.5 H478.0 M477.0 296.5 H485.0 M484.0 296.5 H492.0 M491.0 296.5 H499.0 M498.0 296.5 H506.0 M505.0 296.5 H514.0 M513.0 296.5 H521.0 M520.0 296.5 H528.0 M527.0 296.5 H535.0 M534.0 296.5 H542.0 M541.0 296.5 H549.0 M548.0 296.5 H557.0 M556.0 296.5 H564.0 M563.0 296.5 H571.0 M570.0 296.5 H578.0 M577.0 296.5 H586.0 M585.0 296.5 H593.0 M592.0 296.5 H601.0 M600.0 296.5 H609.0 M608.0 296.5 H616.0 M615.0 296.5 H624.0 M623.0 296.5 H632.0 M631.0 296.5 H640.0 M639.0 296.5 H648.0 M647.0 296.5 H657.0 M656.0 296.5 H665.0 M664.0 296.5 H673.0 M672.0 296.5 H681.0 M680.0 296.5 H690.0 M689.0 296.5 H698.0 M697.0 296.5 H706.0 M705.0 296.5 H714.0 M713.0 296.5 H723.0 M722.0 296.5 H731.0 M730.0 296.5 H739.0 M738.0 296.5 H747.0 M746.0 296.5 H755.0 M754.0 296.5 H763.0 M762.0 296.5 H771.0 M770.0 296.5 H780.0 M779.0 296.5 H788.0 M787.0 296.5 H796.0 M795.0 296.5 H804.0 M803.0 296.5 H812.0 M811.0 296.5 H820.0 M819.0 296.5 H828.0 M827.0 296.5 H836.0 M835.0 296.5 H844.0 M843.0 296.5 H852.0 M851.0 296.5 H860.0 M859.0 296.5 H868.0 M867.0 296.5 H876.0 M875.0 296.5 H884.0 M883.0 296.5 H892.0 M891.0 296.5 H900.0 M899.0 296.5 H908.0 M907.0 296.5 H916.0 M915.0 296.5 H924.0 M923.0 296.5 H932.0 M931.0 296.5 H940.0 M939.0 296.5 H949.0 M948.0 296.5 H957.0 M956.0 296.5 H965.0 M964.0 296.5 H973.0 M972.0 296.5 H981.0 M980.0 296.5 H989.0 M988.0 296.5 H997.0 M996.0 296.5 H1006.0 M1005.0 296.5 H1014.0 M1013.0 296.5 H1022.0 M1021.0 296.5 H1030.0 M1029.0 296.5 H1039.0 M1038.0 296.5 H1047.0 M1046.0 296.5 H1055.0 M1054.0 296.5 H1063.0 M1062.0 296.5 H1072.0 M1071.0 296.5 H1080.0 M1079.0 296.5 H1088.0 M1087.0 296.5 H1096.0 M1095.0 296.5 H1104.0 M1103.0 296.5 H1111.0 M1110.0 296.5 H1119.0 M1118.0 296.5 H1127.0 M1126.0 296.5 H1134.0 M1133.0 296.5 H1142.0 M1141.0 296.5 H1149.0 M1148.0 296.5 H1156.0 M1155.0 296.5 H1163.0 M1162.0 296.5 H1171.0 M1170.0 296.5 H1178.0 M1177.0 296.5 H1185.0 M1184.0 296.5 H1192.0 M1191.0 296.5 H1199.0 M1198.0 296.5 H1206.0 M1205.0 296.5 H1214.0 M1213.0 296.5 H1221.0 M1220.0 296.5 H1228.0 M1227.0 296.5 H1235.0 M1234.0 296.5 H1242.0 M1241.0 296.5 H1249.0 M1248.0 296.5 H1256.0 M1255.0 296.5 H1263.0 M1262.0 296.5 H1270.0 M1269.0 296.5 H1277.0 M1276.0 296.5 H1285.0 M1284.0 296.5 H1292.0 M1291.0 296.5 H1299.0 M1298.0 296.5 H1306.0 M1305.0 296.5 H1313.0 M1312.0 296.5 H1320.0 M1319.0 296.5 H1327.0 M1326.0 296.5 H1334.0 M1333.0 296.5 H1341.0 M1340.0 296.5 H1348.0 M1347.0 296.5 H1355.0 M1354.0 296.5 H1362.0 M1361.0 296.5 H1369.0 M1368.0 296.5 H1376.0 M1375.0 296.5 H1383.0 M1382.0 296.5 H1390.0 M1389.0 296.5 H1396.0 M1395.0 296.5 H1403.0 M1402.0 296.5 H1410.0 M1409.0 296.5 H1417.0 M1416.0 296.5 H1423.0 M1422.0 296.5 H1430.0 M1429.0 296.5 H1436.0 M1435.0 296.5 H1443.0 M1442.0 296.5 H1450.0 M1449.0 296.5 H1456.0 M1455.0 296.5 H1462.0 M1461.0 296.5 H1469.0 M1468.0 296.5 H1475.0 M1474.0 296.5 H1482.0 M1481.0 296.5 H1488.0 M1487.0 296.5 H1494.0 M1493.0 296.5 H1500.0 M1499.0 296.5 H1506.0 M1505.0 296.5 H1513.0 M1512.0 296.5 H1519.0 M1518.0 296.5 H1525.0 M1524.0 296.5 H1531.0 M1530.0 296.5 H1537.0 M1536.0 296.5 H1543.0 M1542.0 295.5 H1549.0 M1548.0 295.5 H1554.0 M1553.0 295.5 H1560.0 M1559.0 295.5 H1566.0 M1565.0 295.5 H1572.0 M1571.0 295.5 H1578.0 M1577.0 295.5 H1583.0 M1582.0 295.5 H1589.0 M1588.0 295.5 H1595.0 M1594.0 295.5 H1601.0 M1600.0 295.5 H1607.0 M1606.0 294.5 H1612.0 M1611.0 294.5 H1618.0 M1617.0 294.5 H1624.0 M1623.0 294.5 H1630.0 M1629.0 294.5 H1636.0 M1635.0 294.5 H1641.0 M1640.0 294.5 H1647.0 M1646.0 294.5 H1653.0 M1652.0 294.5 H1659.0 M1658.0 294.5 H1665.0 M54.0 298.5 H61.0 M60.0 298.5 H67.0 M66.0 299.5 H73.0 M72.0 299.5 H79.0 M78.0 299.5 H84.0 M83.0 299.5 H90.0 M89.0 299.5 H96.0 M95.0 299.5 H102.0 M101.0 300.5 H108.0 M107.0 300.5 H113.0 M112.0 300.5 H119.0 M118.0 300.5 H125.0 M124.0 300.5 H131.0 M130.0 300.5 H137.0 M136.0 300.5 H142.0 M141.0 301.5 H148.0 M147.0 301.5 H154.0 M153.0 301.5 H160.0 M159.0 301.5 H166.0 M165.0 301.5 H171.0 M170.0 301.5 H177.0 M176.0 301.5 H183.0 M182.0 302.5 H189.0 M188.0 302.5 H195.0 M194.0 302.5 H201.0 M200.0 302.5 H207.0 M206.0 302.5 H214.0 M213.0 302.5 H220.0 M219.0 302.5 H226.0 M225.0 302.5 H232.0 M231.0 302.5 H238.0 M237.0 302.5 H245.0 M244.0 302.5 H251.0 M250.0 302.5 H258.0 M257.0 302.5 H264.0 M263.0 302.5 H270.0 M269.0 302.5 H277.0 M276.0 302.5 H284.0 M283.0 302.5 H290.0 M289.0 302.5 H297.0 M296.0 302.5 H303.0 M302.0 303.5 H310.0 M309.0 303.5 H317.0 M316.0 303.5 H324.0 M323.0 303.5 H330.0 M329.0 303.5 H337.0 M336.0 303.5 H344.0 M343.0 303.5 H351.0 M350.0 303.5 H358.0 M357.0 303.5 H365.0 M364.0 303.5 H372.0 M371.0 303.5 H379.0 M378.0 303.5 H386.0 M385.0 303.5 H393.0 M392.0 303.5 H400.0 M399.0 303.5 H407.0 M406.0 303.5 H414.0 M413.0 303.5 H421.0 M420.0 303.5 H428.0 M427.0 303.5 H435.0 M434.0 303.5 H443.0 M442.0 303.5 H450.0 M449.0 303.5 H457.0 M456.0 303.5 H464.0 M463.0 304.5 H471.0 M470.0 304.5 H478.0 M477.0 304.5 H485.0 M484.0 304.5 H492.0 M491.0 304.5 H499.0 M498.0 304.5 H506.0 M505.0 304.5 H514.0 M513.0 304.5 H521.0 M520.0 304.5 H528.0 M527.0 304.5 H535.0 M534.0 304.5 H542.0 M541.0 304.5 H549.0 M548.0 304.5 H557.0 M556.0 304.5 H564.0 M563.0 304.5 H571.0 M570.0 304.5 H578.0 M577.0 304.5 H586.0 M585.0 304.5 H593.0 M592.0 304.5 H601.0 M600.0 304.5 H609.0 M608.0 304.5 H616.0 M615.0 304.5 H624.0 M623.0 305.5 H632.0 M631.0 305.5 H640.0 M639.0 305.5 H648.0 M647.0 305.5 H657.0 M656.0 305.5 H665.0 M664.0 305.5 H673.0 M672.0 305.5 H681.0 M680.0 305.5 H690.0 M689.0 305.5 H698.0 M697.0 305.5 H706.0 M705.0 305.5 H714.0 M713.0 305.5 H723.0 M722.0 305.5 H731.0 M730.0 305.5 H739.0 M738.0 305.5 H747.0 M746.0 305.5 H755.0 M754.0 305.5 H763.0 M762.0 305.5 H771.0 M770.0 305.5 H780.0 M779.0 305.5 H788.0 M787.0 305.5 H796.0 M795.0 305.5 H804.0 M803.0 305.5 H812.0 M811.0 305.5 H820.0 M819.0 305.5 H828.0 M827.0 305.5 H836.0 M835.0 305.5 H844.0 M843.0 305.5 H852.0 M851.0 305.5 H860.0 M859.0 305.5 H868.0 M867.0 305.5 H876.0 M875.0 305.5 H884.0 M883.0 305.5 H892.0 M891.0 305.5 H900.0 M899.0 305.5 H908.0 M907.0 305.5 H916.0 M915.0 305.5 H924.0 M923.0 305.5 H932.0 M931.0 305.5 H940.0 M939.0 305.5 H949.0 M948.0 305.5 H957.0 M956.0 305.5 H965.0 M964.0 305.5 H973.0 M972.0 305.5 H981.0 M980.0 305.5 H989.0 M988.0 305.5 H997.0 M996.0 305.5 H1006.0 M1005.0 305.5 H1014.0 M1013.0 305.5 H1022.0 M1021.0 305.5 H1030.0 M1029.0 305.5 H1039.0 M1038.0 305.5 H1047.0 M1046.0 305.5 H1055.0 M1054.0 305.5 H1063.0 M1062.0 305.5 H1072.0 M1071.0 305.5 H1080.0 M1079.0 305.5 H1088.0 M1087.0 305.5 H1096.0 M1095.0 304.5 H1104.0 M1103.0 304.5 H1111.0 M1110.0 304.5 H1119.0 M1118.0 304.5 H1127.0 M1126.0 304.5 H1134.0 M1133.0 304.5 H1142.0 M1141.0 304.5 H1149.0 M1148.0 304.5 H1156.0 M1155.0 304.5 H1163.0 M1162.0 304.5 H1171.0 M1170.0 304.5 H1178.0 M1177.0 304.5 H1185.0 M1184.0 304.5 H1192.0 M1191.0 304.5 H1199.0 M1198.0 304.5 H1206.0 M1205.0 304.5 H1214.0 M1213.0 304.5 H1221.0 M1220.0 304.5 H1228.0 M1227.0 304.5 H1235.0 M1234.0 304.5 H1242.0 M1241.0 304.5 H1249.0 M1248.0 304.5 H1256.0 M1255.0 303.5 H1263.0 M1262.0 303.5 H1270.0 M1269.0 303.5 H1277.0 M1276.0 303.5 H1285.0 M1284.0 303.5 H1292.0 M1291.0 303.5 H1299.0 M1298.0 303.5 H1306.0 M1305.0 303.5 H1313.0 M1312.0 303.5 H1320.0 M1319.0 303.5 H1327.0 M1326.0 303.5 H1334.0 M1333.0 303.5 H1341.0 M1340.0 303.5 H1348.0 M1347.0 303.5 H1355.0 M1354.0 303.5 H1362.0 M1361.0 303.5 H1369.0 M1368.0 303.5 H1376.0 M1375.0 303.5 H1383.0 M1382.0 303.5 H1390.0 M1389.0 303.5 H1396.0 M1395.0 303.5 H1403.0 M1402.0 303.5 H1410.0 M1409.0 303.5 H1417.0 M1416.0 302.5 H1423.0 M1422.0 302.5 H1430.0 M1429.0 302.5 H1436.0 M1435.0 302.5 H1443.0 M1442.0 302.5 H1450.0 M1449.0 302.5 H1456.0 M1455.0 302.5 H1462.0 M1461.0 302.5 H1469.0 M1468.0 302.5 H1475.0 M1474.0 302.5 H1482.0 M1481.0 302.5 H1488.0 M1487.0 302.5 H1494.0 M1493.0 302.5 H1500.0 M1499.0 302.5 H1506.0 M1505.0 302.5 H1513.0 M1512.0 302.5 H1519.0 M1518.0 302.5 H1525.0 M1524.0 302.5 H1531.0 M1530.0 302.5 H1537.0 M1536.0 301.5 H1543.0 M1542.0 301.5 H1549.0 M1548.0 301.5 H1554.0 M1553.0 301.5 H1560.0 M1559.0 301.5 H1566.0 M1565.0 301.5 H1572.0 M1571.0 301.5 H1578.0 M1577.0 300.5 H1583.0 M1582.0 300.5 H1589.0 M1588.0 300.5 H1595.0 M1594.0 300.5 H1601.0 M1600.0 300.5 H1607.0 M1606.0 300.5 H1612.0 M1611.0 300.5 H1618.0 M1617.0 299.5 H1624.0 M1623.0 299.5 H1630.0 M1629.0 299.5 H1636.0 M1635.0 299.5 H1641.0 M1640.0 299.5 H1647.0 M1646.0 299.5 H1653.0 M1652.0 298.5 H1659.0 M1658.0 298.5 H1665.0 M54.0 303.5 H61.0 M60.0 303.5 H67.0 M66.0 303.5 H73.0 M72.0 304.5 H79.0 M78.0 304.5 H84.0 M83.0 304.5 H90.0 M89.0 304.5 H96.0 M95.0 304.5 H102.0 M101.0 305.5 H108.0 M107.0 305.5 H113.0 M112.0 305.5 H119.0 M118.0 305.5 H125.0 M124.0 305.5 H131.0 M130.0 306.5 H137.0 M136.0 306.5 H142.0 M141.0 306.5 H148.0 M147.0 306.5 H154.0 M153.0 306.5 H160.0 M159.0 307.5 H166.0 M165.0 307.5 H171.0 M170.0 307.5 H177.0 M176.0 307.5 H183.0 M182.0 307.5 H189.0 M188.0 308.5 H195.0 M194.0 308.5 H201.0 M200.0 308.5 H207.0 M206.0 308.5 H214.0 M213.0 308.5 H220.0 M219.0 308.5 H226.0 M225.0 308.5 H232.0 M231.0 308.5 H238.0 M237.0 308.5 H245.0 M244.0 309.5 H251.0 M250.0 309.5 H258.0 M257.0 309.5 H264.0 M263.0 309.5 H270.0 M269.0 309.5 H277.0 M276.0 309.5 H284.0 M283.0 309.5 H290.0 M289.0 309.5 H297.0 M296.0 309.5 H303.0 M302.0 309.5 H310.0 M309.0 309.5 H317.0 M316.0 309.5 H324.0 M323.0 309.5 H330.0 M329.0 310.5 H337.0 M336.0 310.5 H344.0 M343.0 310.5 H351.0 M350.0 310.5 H358.0 M357.0 310.5 H365.0 M364.0 310.5 H372.0 M371.0 310.5 H379.0 M378.0 310.5 H386.0 M385.0 310.5 H393.0 M392.0 310.5 H400.0 M399.0 310.5 H407.0 M406.0 311.5 H414.0 M413.0 311.5 H421.0 M420.0 311.5 H428.0 M427.0 311.5 H435.0 M434.0 311.5 H443.0 M442.0 311.5 H450.0 M449.0 311.5 H457.0 M456.0 311.5 H464.0 M463.0 311.5 H471.0 M470.0 311.5 H478.0 M477.0 311.5 H485.0 M484.0 311.5 H492.0 M491.0 311.5 H499.0 M498.0 312.5 H506.0 M505.0 312.5 H514.0 M513.0 312.5 H521.0 M520.0 312.5 H528.0 M527.0 312.5 H535.0 M534.0 312.5 H542.0 M541.0 312.5 H549.0 M548.0 312.5 H557.0 M556.0 312.5 H564.0 M563.0 312.5 H571.0 M570.0 312.5 H578.0 M577.0 312.5 H586.0 M585.0 313.5 H593.0 M592.0 313.5 H601.0 M600.0 313.5 H609.0 M608.0 313.5 H616.0 M615.0 313.5 H624.0 M623.0 313.5 H632.0 M631.0 313.5 H640.0 M639.0 313.5 H648.0 M647.0 313.5 H657.0 M656.0 313.5 H665.0 M664.0 313.5 H673.0 M672.0 313.5 H681.0 M680.0 313.5 H690.0 M689.0 313.5 H698.0 M697.0 313.5 H706.0 M705.0 313.5 H714.0 M713.0 313.5 H723.0 M722.0 313.5 H731.0 M730.0 313.5 H739.0 M738.0 313.5 H747.0 M746.0 313.5 H755.0 M754.0 313.5 H763.0 M762.0 313.5 H771.0 M770.0 313.5 H780.0 M779.0 313.5 H788.0 M787.0 313.5 H796.0 M795.0 313.5 H804.0 M803.0 313.5 H812.0 M811.0 313.5 H820.0 M819.0 313.5 H828.0 M827.0 313.5 H836.0 M835.0 313.5 H844.0 M843.0 313.5 H852.0 M851.0 313.5 H860.0 M859.0 313.5 H868.0 M867.0 313.5 H876.0 M875.0 313.5 H884.0 M883.0 313.5 H892.0 M891.0 313.5 H900.0 M899.0 313.5 H908.0 M907.0 313.5 H916.0 M915.0 313.5 H924.0 M923.0 313.5 H932.0 M931.0 313.5 H940.0 M939.0 313.5 H949.0 M948.0 313.5 H957.0 M956.0 313.5 H965.0 M964.0 313.5 H973.0 M972.0 313.5 H981.0 M980.0 313.5 H989.0 M988.0 313.5 H997.0 M996.0 313.5 H1006.0 M1005.0 313.5 H1014.0 M1013.0 313.5 H1022.0 M1021.0 313.5 H1030.0 M1029.0 313.5 H1039.0 M1038.0 313.5 H1047.0 M1046.0 313.5 H1055.0 M1054.0 313.5 H1063.0 M1062.0 313.5 H1072.0 M1071.0 313.5 H1080.0 M1079.0 313.5 H1088.0 M1087.0 313.5 H1096.0 M1095.0 313.5 H1104.0 M1103.0 313.5 H1111.0 M1110.0 313.5 H1119.0 M1118.0 313.5 H1127.0 M1126.0 313.5 H1134.0 M1133.0 312.5 H1142.0 M1141.0 312.5 H1149.0 M1148.0 312.5 H1156.0 M1155.0 312.5 H1163.0 M1162.0 312.5 H1171.0 M1170.0 312.5 H1178.0 M1177.0 312.5 H1185.0 M1184.0 312.5 H1192.0 M1191.0 312.5 H1199.0 M1198.0 312.5 H1206.0 M1205.0 312.5 H1214.0 M1213.0 312.5 H1221.0 M1220.0 311.5 H1228.0 M1227.0 311.5 H1235.0 M1234.0 311.5 H1242.0 M1241.0 311.5 H1249.0 M1248.0 311.5 H1256.0 M1255.0 311.5 H1263.0 M1262.0 311.5 H1270.0 M1269.0 311.5 H1277.0 M1276.0 311.5 H1285.0 M1284.0 311.5 H1292.0 M1291.0 311.5 H1299.0 M1298.0 311.5 H1306.0 M1305.0 311.5 H1313.0 M1312.0 310.5 H1320.0 M1319.0 310.5 H1327.0 M1326.0 310.5 H1334.0 M1333.0 310.5 H1341.0 M1340.0 310.5 H1348.0 M1347.0 310.5 H1355.0 M1354.0 310.5 H1362.0 M1361.0 310.5 H1369.0 M1368.0 310.5 H1376.0 M1375.0 310.5 H1383.0 M1382.0 310.5 H1390.0 M1389.0 309.5 H1396.0 M1395.0 309.5 H1403.0 M1402.0 309.5 H1410.0 M1409.0 309.5 H1417.0 M1416.0 309.5 H1423.0 M1422.0 309.5 H1430.0 M1429.0 309.5 H1436.0 M1435.0 309.5 H1443.0 M1442.0 309.5 H1450.0 M1449.0 309.5 H1456.0 M1455.0 309.5 H1462.0 M1461.0 309.5 H1469.0 M1468.0 309.5 H1475.0 M1474.0 308.5 H1482.0 M1481.0 308.5 H1488.0 M1487.0 308.5 H1494.0 M1493.0 308.5 H1500.0 M1499.0 308.5 H1506.0 M1505.0 308.5 H1513.0 M1512.0 308.5 H1519.0 M1518.0 308.5 H1525.0 M1524.0 308.5 H1531.0 M1530.0 307.5 H1537.0 M1536.0 307.5 H1543.0 M1542.0 307.5 H1549.0 M1548.0 307.5 H1554.0 M1553.0 307.5 H1560.0 M1559.0 306.5 H1566.0 M1565.0 306.5 H1572.0 M1571.0 306.5 H1578.0 M1577.0 306.5 H1583.0 M1582.0 306.5 H1589.0 M1588.0 305.5 H1595.0 M1594.0 305.5 H1601.0 M1600.0 305.5 H1607.0 M1606.0 305.5 H1612.0 M1611.0 305.5 H1618.0 M1617.0 304.5 H1624.0 M1623.0 304.5 H1630.0 M1629.0 304.5 H1636.0 M1635.0 304.5 H1641.0 M1640.0 304.5 H1647.0 M1646.0 303.5 H1653.0 M1652.0 303.5 H1659.0 M1658.0 303.5 H1665.0 M54.0 308.5 H61.0 M60.0 308.5 H67.0 M66.0 308.5 H73.0 M72.0 308.5 H79.0 M78.0 309.5 H84.0 M83.0 309.5 H90.0 M89.0 309.5 H96.0 M95.0 309.5 H102.0 M101.0 310.5 H108.0 M107.0 310.5 H113.0 M112.0 310.5 H119.0 M118.0 310.5 H125.0 M124.0 311.5 H131.0 M130.0 311.5 H137.0 M136.0 311.5 H142.0 M141.0 312.5 H148.0 M147.0 312.5 H154.0 M153.0 312.5 H160.0 M159.0 312.5 H166.0 M165.0 313.5 H171.0 M170.0 313.5 H177.0 M176.0 313.5 H183.0 M182.0 313.5 H189.0 M188.0 314.5 H195.0 M194.0 314.5 H201.0 M200.0 314.5 H207.0 M206.0 314.5 H214.0 M213.0 314.5 H220.0 M219.0 314.5 H226.0 M225.0 315.5 H232.0 M231.0 315.5 H238.0 M237.0 315.5 H245.0 M244.0 315.5 H251.0 M250.0 315.5 H258.0 M257.0 315.5 H264.0 M263.0 315.5 H270.0 M269.0 315.5 H277.0 M276.0 315.5 H284.0 M283.0 316.5 H290.0 M289.0 316.5 H297.0 M296.0 316.5 H303.0 M302.0 316.5 H310.0 M309.0 316.5 H317.0 M316.0 316.5 H324.0 M323.0 316.5 H330.0 M329.0 316.5 H337.0 M336.0 317.5 H344.0 M343.0 317.5 H351.0 M350.0 317.5 H358.0 M357.0 317.5 H365.0 M364.0 317.5 H372.0 M371.0 317.5 H379.0 M378.0 317.5 H386.0 M385.0 318.5 H393.0 M392.0 318.5 H400.0 M399.0 318.5 H407.0 M406.0 318.5 H414.0 M413.0 318.5 H421.0 M420.0 318.5 H428.0 M427.0 318.5 H435.0 M434.0 318.5 H443.0 M442.0 319.5 H450.0 M449.0 319.5 H457.0 M456.0 319.5 H464.0 M463.0 319.5 H471.0 M470.0 319.5 H478.0 M477.0 319.5 H485.0 M484.0 319.5 H492.0 M491.0 319.5 H499.0 M498.0 319.5 H506.0 M505.0 320.5 H514.0 M513.0 320.5 H521.0 M520.0 320.5 H528.0 M527.0 320.5 H535.0 M534.0 320.5 H542.0 M541.0 320.5 H549.0 M548.0 320.5 H557.0 M556.0 320.5 H564.0 M563.0 320.5 H571.0 M570.0 321.5 H578.0 M577.0 321.5 H586.0 M585.0 321.5 H593.0 M592.0 321.5 H601.0 M600.0 321.5 H609.0 M608.0 321.5 H616.0 M615.0 321.5 H624.0 M623.0 321.5 H632.0 M631.0 321.5 H640.0 M639.0 321.5 H648.0 M647.0 321.5 H657.0 M656.0 321.5 H665.0 M664.0 321.5 H673.0 M672.0 321.5 H681.0 M680.0 322.5 H690.0 M689.0 322.5 H698.0 M697.0 322.5 H706.0 M705.0 322.5 H714.0 M713.0 322.5 H723.0 M722.0 322.5 H731.0 M730.0 322.5 H739.0 M738.0 322.5 H747.0 M746.0 322.5 H755.0 M754.0 322.5 H763.0 M762.0 322.5 H771.0 M770.0 322.5 H780.0 M779.0 322.5 H788.0 M787.0 322.5 H796.0 M795.0 322.5 H804.0 M803.0 322.5 H812.0 M811.0 322.5 H820.0 M819.0 322.5 H828.0 M827.0 322.5 H836.0 M835.0 322.5 H844.0 M843.0 322.5 H852.0 M851.0 322.5 H860.0 M859.0 322.5 H868.0 M867.0 322.5 H876.0 M875.0 322.5 H884.0 M883.0 322.5 H892.0 M891.0 322.5 H900.0 M899.0 322.5 H908.0 M907.0 322.5 H916.0 M915.0 322.5 H924.0 M923.0 322.5 H932.0 M931.0 322.5 H940.0 M939.0 322.5 H949.0 M948.0 322.5 H957.0 M956.0 322.5 H965.0 M964.0 322.5 H973.0 M972.0 322.5 H981.0 M980.0 322.5 H989.0 M988.0 322.5 H997.0 M996.0 322.5 H1006.0 M1005.0 322.5 H1014.0 M1013.0 322.5 H1022.0 M1021.0 322.5 H1030.0 M1029.0 322.5 H1039.0 M1038.0 321.5 H1047.0 M1046.0 321.5 H1055.0 M1054.0 321.5 H1063.0 M1062.0 321.5 H1072.0 M1071.0 321.5 H1080.0 M1079.0 321.5 H1088.0 M1087.0 321.5 H1096.0 M1095.0 321.5 H1104.0 M1103.0 321.5 H1111.0 M1110.0 321.5 H1119.0 M1118.0 321.5 H1127.0 M1126.0 321.5 H1134.0 M1133.0 321.5 H1142.0 M1141.0 321.5 H1149.0 M1148.0 320.5 H1156.0 M1155.0 320.5 H1163.0 M1162.0 320.5 H1171.0 M1170.0 320.5 H1178.0 M1177.0 320.5 H1185.0 M1184.0 320.5 H1192.0 M1191.0 320.5 H1199.0 M1198.0 320.5 H1206.0 M1205.0 320.5 H1214.0 M1213.0 319.5 H1221.0 M1220.0 319.5 H1228.0 M1227.0 319.5 H1235.0 M1234.0 319.5 H1242.0 M1241.0 319.5 H1249.0 M1248.0 319.5 H1256.0 M1255.0 319.5 H1263.0 M1262.0 319.5 H1270.0 M1269.0 319.5 H1277.0 M1276.0 318.5 H1285.0 M1284.0 318.5 H1292.0 M1291.0 318.5 H1299.0 M1298.0 318.5 H1306.0 M1305.0 318.5 H1313.0 M1312.0 318.5 H1320.0 M1319.0 318.5 H1327.0 M1326.0 318.5 H1334.0 M1333.0 317.5 H1341.0 M1340.0 317.5 H1348.0 M1347.0 317.5 H1355.0 M1354.0 317.5 H1362.0 M1361.0 317.5 H1369.0 M1368.0 317.5 H1376.0 M1375.0 317.5 H1383.0 M1382.0 316.5 H1390.0 M1389.0 316.5 H1396.0 M1395.0 316.5 H1403.0 M1402.0 316.5 H1410.0 M1409.0 316.5 H1417.0 M1416.0 316.5 H1423.0 M1422.0 316.5 H1430.0 M1429.0 316.5 H1436.0 M1435.0 315.5 H1443.0 M1442.0 315.5 H1450.0 M1449.0 315.5 H1456.0 M1455.0 315.5 H1462.0 M1461.0 315.5 H1469.0 M1468.0 315.5 H1475.0 M1474.0 315.5 H1482.0 M1481.0 315.5 H1488.0 M1487.0 315.5 H1494.0 M1493.0 314.5 H1500.0 M1499.0 314.5 H1506.0 M1505.0 314.5 H1513.0 M1512.0 314.5 H1519.0 M1518.0 314.5 H1525.0 M1524.0 314.5 H1531.0 M1530.0 313.5 H1537.0 M1536.0 313.5 H1543.0 M1542.0 313.5 H1549.0 M1548.0 313.5 H1554.0 M1553.0 312.5 H1560.0 M1559.0 312.5 H1566.0 M1565.0 312.5 H1572.0 M1571.0 312.5 H1578.0 M1577.0 311.5 H1583.0 M1582.0 311.5 H1589.0 M1588.0 311.5 H1595.0 M1594.0 310.5 H1601.0 M1600.0 310.5 H1607.0 M1606.0 310.5 H1612.0 M1611.0 310.5 H1618.0 M1617.0 309.5 H1624.0 M1623.0 309.5 H1630.0 M1629.0 309.5 H1636.0 M1635.0 309.5 H1641.0 M1640.0 308.5 H1647.0 M1646.0 308.5 H1653.0 M1652.0 308.5 H1659.0 M1658.0 308.5 H1665.0 M54.0 312.5 H61.0 M60.0 313.5 H67.0 M66.0 313.5 H73.0 M72.0 313.5 H79.0 M78.0 314.5 H84.0 M83.0 314.5 H90.0 M89.0 314.5 H96.0 M95.0 314.5 H102.0 M101.0 315.5 H108.0 M107.0 315.5 H113.0 M112.0 315.5 H119.0 M118.0 316.5 H125.0 M124.0 316.5 H131.0 M130.0 316.5 H137.0 M136.0 317.5 H142.0 M141.0 317.5 H148.0 M147.0 317.5 H154.0 M153.0 318.5 H160.0 M159.0 318.5 H166.0 M165.0 318.5 H171.0 M170.0 319.5 H177.0 M176.0 319.5 H183.0 M182.0 319.5 H189.0 M188.0 320.5 H195.0 M194.0 320.5 H201.0 M200.0 320.5 H207.0 M206.0 320.5 H214.0 M213.0 320.5 H220.0 M219.0 321.5 H226.0 M225.0 321.5 H232.0 M231.0 321.5 H238.0 M237.0 321.5 H245.0 M244.0 321.5 H251.0 M250.0 321.5 H258.0 M257.0 322.5 H264.0 M263.0 322.5 H270.0 M269.0 322.5 H277.0 M276.0 322.5 H284.0 M283.0 322.5 H290.0 M289.0 322.5 H297.0 M296.0 323.5 H303.0 M302.0 323.5 H310.0 M309.0 323.5 H317.0 M316.0 323.5 H324.0 M323.0 323.5 H330.0 M329.0 323.5 H337.0 M336.0 324.5 H344.0 M343.0 324.5 H351.0 M350.0 324.5 H358.0 M357.0 324.5 H365.0 M364.0 324.5 H372.0 M371.0 324.5 H379.0 M378.0 325.5 H386.0 M385.0 325.5 H393.0 M392.0 325.5 H400.0 M399.0 325.5 H407.0 M406.0 325.5 H414.0 M413.0 325.5 H421.0 M420.0 326.5 H428.0 M427.0 326.5 H435.0 M434.0 326.5 H443.0 M442.0 326.5 H450.0 M449.0 326.5 H457.0 M456.0 326.5 H464.0 M463.0 327.5 H471.0 M470.0 327.5 H478.0 M477.0 327.5 H485.0 M484.0 327.5 H492.0 M491.0 327.5 H499.0 M498.0 327.5 H506.0 M505.0 327.5 H514.0 M513.0 328.5 H521.0 M520.0 328.5 H528.0 M527.0 328.5 H535.0 M534.0 328.5 H542.0 M541.0 328.5 H549.0 M548.0 328.5 H557.0 M556.0 328.5 H564.0 M563.0 329.5 H571.0 M570.0 329.5 H578.0 M577.0 329.5 H586.0 M585.0 329.5 H593.0 M592.0 329.5 H601.0 M600.0 329.5 H609.0 M608.0 330.5 H616.0 M615.0 330.5 H624.0 M623.0 330.5 H632.0 M631.0 330.5 H640.0 M639.0 330.5 H648.0 M647.0 330.5 H657.0 M656.0 330.5 H665.0 M664.0 330.5 H673.0 M672.0 330.5 H681.0 M680.0 330.5 H690.0 M689.0 330.5 H698.0 M697.0 330.5 H706.0 M705.0 330.5 H714.0 M713.0 330.5 H723.0 M722.0 330.5 H731.0 M730.0 330.5 H739.0 M738.0 330.5 H747.0 M746.0 330.5 H755.0 M754.0 330.5 H763.0 M762.0 330.5 H771.0 M770.0 330.5 H780.0 M779.0 330.5 H788.0 M787.0 330.5 H796.0 M795.0 330.5 H804.0 M803.0 330.5 H812.0 M811.0 330.5 H820.0 M819.0 330.5 H828.0 M827.0 330.5 H836.0 M835.0 331.5 H844.0 M843.0 331.5 H852.0 M851.0 331.5 H860.0 M859.0 331.5 H868.0 M867.0 331.5 H876.0 M875.0 331.5 H884.0 M883.0 330.5 H892.0 M891.0 330.5 H900.0 M899.0 330.5 H908.0 M907.0 330.5 H916.0 M915.0 330.5 H924.0 M923.0 330.5 H932.0 M931.0 330.5 H940.0 M939.0 330.5 H949.0 M948.0 330.5 H957.0 M956.0 330.5 H965.0 M964.0 330.5 H973.0 M972.0 330.5 H981.0 M980.0 330.5 H989.0 M988.0 330.5 H997.0 M996.0 330.5 H1006.0 M1005.0 330.5 H1014.0 M1013.0 330.5 H1022.0 M1021.0 330.5 H1030.0 M1029.0 330.5 H1039.0 M1038.0 330.5 H1047.0 M1046.0 330.5 H1055.0 M1054.0 330.5 H1063.0 M1062.0 330.5 H1072.0 M1071.0 330.5 H1080.0 M1079.0 330.5 H1088.0 M1087.0 330.5 H1096.0 M1095.0 330.5 H1104.0 M1103.0 330.5 H1111.0 M1110.0 329.5 H1119.0 M1118.0 329.5 H1127.0 M1126.0 329.5 H1134.0 M1133.0 329.5 H1142.0 M1141.0 329.5 H1149.0 M1148.0 329.5 H1156.0 M1155.0 328.5 H1163.0 M1162.0 328.5 H1171.0 M1170.0 328.5 H1178.0 M1177.0 328.5 H1185.0 M1184.0 328.5 H1192.0 M1191.0 328.5 H1199.0 M1198.0 328.5 H1206.0 M1205.0 327.5 H1214.0 M1213.0 327.5 H1221.0 M1220.0 327.5 H1228.0 M1227.0 327.5 H1235.0 M1234.0 327.5 H1242.0 M1241.0 327.5 H1249.0 M1248.0 327.5 H1256.0 M1255.0 326.5 H1263.0 M1262.0 326.5 H1270.0 M1269.0 326.5 H1277.0 M1276.0 326.5 H1285.0 M1284.0 326.5 H1292.0 M1291.0 326.5 H1299.0 M1298.0 325.5 H1306.0 M1305.0 325.5 H1313.0 M1312.0 325.5 H1320.0 M1319.0 325.5 H1327.0 M1326.0 325.5 H1334.0 M1333.0 325.5 H1341.0 M1340.0 324.5 H1348.0 M1347.0 324.5 H1355.0 M1354.0 324.5 H1362.0 M1361.0 324.5 H1369.0 M1368.0 324.5 H1376.0 M1375.0 324.5 H1383.0 M1382.0 323.5 H1390.0 M1389.0 323.5 H1396.0 M1395.0 323.5 H1403.0 M1402.0 323.5 H1410.0 M1409.0 323.5 H1417.0 M1416.0 323.5 H1423.0 M1422.0 322.5 H1430.0 M1429.0 322.5 H1436.0 M1435.0 322.5 H1443.0 M1442.0 322.5 H1450.0 M1449.0 322.5 H1456.0 M1455.0 322.5 H1462.0 M1461.0 321.5 H1469.0 M1468.0 321.5 H1475.0 M1474.0 321.5 H1482.0 M1481.0 321.5 H1488.0 M1487.0 321.5 H1494.0 M1493.0 321.5 H1500.0 M1499.0 320.5 H1506.0 M1505.0 320.5 H1513.0 M1512.0 320.5 H1519.0 M1518.0 320.5 H1525.0 M1524.0 320.5 H1531.0 M1530.0 319.5 H1537.0 M1536.0 319.5 H1543.0 M1542.0 319.5 H1549.0 M1548.0 318.5 H1554.0 M1553.0 318.5 H1560.0 M1559.0 318.5 H1566.0 M1565.0 317.5 H1572.0 M1571.0 317.5 H1578.0 M1577.0 317.5 H1583.0 M1582.0 316.5 H1589.0 M1588.0 316.5 H1595.0 M1594.0 316.5 H1601.0 M1600.0 315.5 H1607.0 M1606.0 315.5 H1612.0 M1611.0 315.5 H1618.0 M1617.0 314.5 H1624.0 M1623.0 314.5 H1630.0 M1629.0 314.5 H1636.0 M1635.0 314.5 H1641.0 M1640.0 313.5 H1647.0 M1646.0 313.5 H1653.0 M1652.0 313.5 H1659.0 M1658.0 312.5 H1665.0" stroke="#7070ff" stroke-width="1" fill="none" shape-rendering="crispEdges"/>
<path d="M16.0 306.0 L55.0 275.8 L55.0 312.6 L16.0 316.0 Z" fill="#ffffff"/><path d="M16.5 306.0 V316.0 M18.5 304.3 V315.8 M20.5 302.6 V315.6 M22.5 300.9 V315.4 M24.5 299.2 V315.2 M26.5 297.5 V315.0 M29.5 295.8 V314.8 M31.5 294.2 V314.7 M33.5 292.5 V314.5 M35.5 290.8 V314.3 M38.5 289.1 V314.1 M40.5 287.4 V313.9 M42.5 285.7 V313.7 M44.5 284.0 V313.5 M46.5 282.3 V313.3 M49.5 280.6 V313.1 M51.5 278.9 V312.9 M53.5 277.2 V312.7 M16.0 306.0 L25.0 299.1 L35.0 291.4 L45.0 283.7 L55.0 276.0 M16.0 307.2 L25.0 301.1 L35.0 294.3 L45.0 287.4 L55.0 280.6 M16.0 308.5 L25.0 303.1 L35.0 297.1 L45.0 291.1 L55.0 285.1 M16.0 309.8 L25.0 305.1 L35.0 300.0 L45.0 294.9 L55.0 289.7 M16.0 311.0 L25.0 307.1 L35.0 302.9 L45.0 298.6 L55.0 294.3 M16.0 312.2 L25.0 309.2 L35.0 305.7 L45.0 302.3 L55.0 298.9 M16.0 313.5 L25.0 311.2 L35.0 308.6 L45.0 306.0 L55.0 303.5 M16.0 314.8 L25.0 313.2 L35.0 311.5 L45.0 309.7 L55.0 308.0 M16.0 316.0 L25.0 315.2 L35.0 314.3 L45.0 313.5 L55.0 312.6" stroke="#808000" stroke-width="1" fill="none" shape-rendering="crispEdges"/><path d="M16.0 306.0 L55.0 275.8 L55.0 312.6 L16.0 316.0 Z" stroke="#808000" stroke-width="1" fill="none" shape-rendering="crispEdges"/>
<path d="M1703.0 306.0 L1664.0 275.8 L1664.0 312.6 L1703.0 316.0 Z" fill="#ffffff"/><path d="M1702.5 306.0 V316.0 M1700.5 304.3 V315.8 M1698.5 302.6 V315.6 M1696.5 300.9 V315.4 M1694.5 299.2 V315.2 M1692.5 297.5 V315.0 M1689.5 295.8 V314.8 M1687.5 294.2 V314.7 M1685.5 292.5 V314.5 M1683.5 290.8 V314.3 M1680.5 289.1 V314.1 M1678.5 287.4 V313.9 M1676.5 285.7 V313.7 M1674.5 284.0 V313.5 M1672.5 282.3 V313.3 M1670.5 280.6 V313.1 M1667.5 278.9 V312.9 M1665.5 277.2 V312.7 M1703.0 306.0 L1694.0 299.1 L1684.0 291.4 L1674.0 283.7 L1664.0 276.0 M1703.0 307.2 L1694.0 301.1 L1684.0 294.3 L1674.0 287.4 L1664.0 280.6 M1703.0 308.5 L1694.0 303.1 L1684.0 297.1 L1674.0 291.1 L1664.0 285.1 M1703.0 309.8 L1694.0 305.1 L1684.0 300.0 L1674.0 294.9 L1664.0 289.7 M1703.0 311.0 L1694.0 307.1 L1684.0 302.9 L1674.0 298.6 L1664.0 294.3 M1703.0 312.2 L1694.0 309.2 L1684.0 305.7 L1674.0 302.3 L1664.0 298.9 M1703.0 313.5 L1694.0 311.2 L1684.0 308.6 L1674.0 306.0 L1664.0 303.5 M1703.0 314.8 L1694.0 313.2 L1684.0 311.5 L1674.0 309.7 L1664.0 308.0 M1703.0 316.0 L1694.0 315.2 L1684.0 314.3 L1674.0 313.5 L1664.0 312.6" stroke="#7070ff" stroke-width="1" fill="none" shape-rendering="crispEdges"/><path d="M1703.0 306.0 L1664.0 275.8 L1664.0 312.6 L1703.0 316.0 Z" stroke="#7070ff" stroke-width="1" fill="none" shape-rendering="crispEdges"/>
<path d="M16.0 311.0 L55.0 285.6 L200.0 284.0 L432.0 282.0 L620.0 280.0 L859.5 279.6 L1099.0 280.0 L1287.0 282.0 L1519.0 284.0 L1664.0 285.6 L1703.0 311.0" stroke="#000" stroke-width="1" fill="none" stroke-dasharray="3 3"/>
<path d="M22.1 518.8 L22.3 512.3 L27.9 490.0 L37.0 464.0 L46.4 420.7 L55.0 368.0 L58.8 329.4 L80.5 300.0 L101.0 275.0 L144.5 236.9 L200.0 196.2 L239.6 169.7 L274.3 151.6 L306.5 138.7 L348.6 120.1 L398.1 99.1 L447.7 80.5 L497.2 60.7 L546.7 45.8 L596.3 36.4 L654.3 31.0 L728.6 26.8 L790.6 24.8 L842.6 22.8 L859.5 22.6 L876.4 22.8 L928.4 24.8 L990.4 26.8 L1064.7 31.0 L1122.7 36.4 L1172.3 45.8 L1221.8 60.7 L1271.3 80.5 L1320.9 99.1 L1370.4 120.1 L1412.5 138.7 L1444.7 151.6 L1479.4 169.7 L1519.0 196.2 L1574.5 236.9 L1618.0 275.0 L1638.5 300.0 L1660.2 329.4 L1664.0 368.0 L1672.6 420.7 L1682.0 464.0 L1691.1 490.0 L1696.7 512.3 L1696.9 518.8" stroke="#ff0000" stroke-width="1.00" fill="none" shape-rendering="crispEdges"/>
<path d="M16.2 572.2 L16.7 555.0 L17.6 542.0 L18.1 533.6 L20.6 526.0 L25.5 490.0 L29.4 473.0 L46.4 421.0 L68.0 380.5 L93.0 340.0 L128.5 300.0 L200.0 230.3 L244.6 195.7 L306.5 158.5 L368.4 125.1 L447.7 90.4 L497.2 74.3 L546.7 61.9 L596.3 50.8 L642.0 42.1 L703.9 32.2 L778.2 26.0 L859.5 23.5 L940.8 26.0 L1015.1 32.2 L1077.0 42.1 L1122.7 50.8 L1172.3 61.9 L1221.8 74.3 L1271.3 90.4 L1350.6 125.1 L1412.5 158.5 L1474.4 195.7 L1519.0 230.3 L1590.5 300.0 L1626.0 340.0 L1651.0 380.5 L1672.6 421.0 L1689.6 473.0 L1693.5 490.0 L1698.4 526.0 L1700.9 533.6 L1701.4 542.0 L1702.3 555.0 L1702.8 572.2 L16.2 572.2" stroke="#ff0000" stroke-width="1.00" fill="none" stroke-dasharray="3 3" shape-rendering="crispEdges"/>
<path d="M17.5 267.8 L19.0 235.0 L22.0 225.0 L25.5 220.0 L34.2 221.2 L40.5 220.0 L48.0 216.0 L53.0 210.0 L54.7 190.0 L56.5 168.0 L59.2 158.2 L68.0 152.5 L78.0 143.8 L93.0 132.5 L108.0 124.5 L123.0 118.0 L140.5 112.5 L175.4 106.8 L200.0 105.3 L304.0 99.5 L435.3 100.0 L497.2 101.5 L559.0 106.0 L604.8 104.5 L753.4 104.5 L803.0 105.3 L859.5 106.5 L916.0 105.3 L965.6 104.5 L1114.2 104.5 L1160.0 106.0 L1221.8 101.5 L1283.7 100.0 L1415.0 99.5 L1519.0 105.3 L1543.6 106.8 L1578.5 112.5 L1596.0 118.0 L1611.0 124.5 L1626.0 132.5 L1641.0 143.8 L1651.0 152.5 L1659.8 158.2 L1662.5 168.0 L1664.3 190.0 L1666.0 210.0 L1671.0 216.0 L1678.5 220.0 L1684.8 221.2 L1693.5 220.0 L1697.0 225.0 L1700.0 235.0 L1701.5 267.8" stroke="#008000" stroke-width="1.00" fill="none" shape-rendering="crispEdges"/>
<path d="M17.5 169.8 L21.7 158.4 L37.2 128.5 L55.3 97.4 L103.2 94.4 L200.0 90.4 L580.0 90.4 L654.3 94.1 L728.6 100.3 L803.0 105.3 L859.5 106.5 L916.0 105.3 L990.4 100.3 L1064.7 94.1 L1139.0 90.4 L1519.0 90.4 L1615.8 94.4 L1663.7 97.4 L1681.8 128.5 L1697.3 158.4 L1701.5 169.8" stroke="#008000" stroke-width="1.00" fill="none" stroke-dasharray="3 3" shape-rendering="crispEdges"/>
<path d="M17.2 503.5 L22.3 510.0 L27.9 516.5 L37.1 522.5 L46.4 527.1 L53.9 530.9" stroke="#008000" stroke-width="1.00" fill="none" shape-rendering="crispEdges"/>
<path d="M1701.8 503.5 L1696.7 510.0 L1691.1 516.5 L1681.9 522.5 L1672.6 527.1 L1665.1 530.9" stroke="#008000" stroke-width="1.00" fill="none" shape-rendering="crispEdges"/>
<path d="M53.9 530.9 L160.0 535.0 L432.0 542.5 L859.5 547.5 L1287.0 542.5 L1559.0 535.0 L1665.1 530.9" stroke="#008000" stroke-width="1.00" fill="none" stroke-dasharray="3 3" shape-rendering="crispEdges"/>
<path d="M16 420.5 H1703" stroke="#008000" stroke-width="1" fill="none" stroke-dasharray="9 6 3 6" shape-rendering="crispEdges"/>
<path d="M12 52.5 H31 M23 47.5 L31 52 L24 56.5" stroke="#000" stroke-width="1" fill="none"/>
<rect x="139" y="303" width="13" height="15" fill="#fff"/>
<text x="139.5" y="314.6" font-family="Liberation Sans" font-size="12" fill="#000">0°</text>
<rect x="394" y="311" width="13" height="15" fill="#fff"/>
<text x="394.3" y="322.5" font-family="Liberation Sans" font-size="12" fill="#000">0°</text>
<rect x="695" y="316" width="13" height="15" fill="#fff"/>
<text x="695.5" y="327.5" font-family="Liberation Sans" font-size="12" fill="#000">0°</text>
<rect x="1567" y="303" width="13" height="15" fill="#fff"/>
<text x="1567.5" y="314.6" font-family="Liberation Sans" font-size="12" fill="#000">0°</text>
<rect x="1312" y="311" width="13" height="15" fill="#fff"/>
<text x="1312.7" y="322.5" font-family="Liberation Sans" font-size="12" fill="#000">0°</text>
<rect x="1011" y="316" width="13" height="15" fill="#fff"/>
<text x="1011.5" y="327.5" font-family="Liberation Sans" font-size="12" fill="#000">0°</text>
<path d="M864 287 L879 271 M865 297 L879 311 M857 300 L839.5 318" stroke="#000" stroke-width="1" fill="none"/>
<path d="M854.5 293 V289 L857 286.5 H862 L864.5 289 V293 Z" fill="#f090f0" stroke="#000" stroke-width="1"/>
<path d="M854.5 293 V300 L857 302.5 H862 L864.5 300 V293 Z" fill="#00ffff" stroke="#000" stroke-width="1"/>
<path d="M850 291.5 H868 M850 298.5 H868" stroke="#000" stroke-width="1" shape-rendering="crispEdges"/>
<rect x="878" y="256" width="17" height="15" fill="#e8b020"/><text x="878.5" y="267.5" font-family="Liberation Sans" font-size="12" fill="#000">XD</text>
<rect x="878" y="311" width="16" height="15" fill="#f890f8"/><text x="878.5" y="322.5" font-family="Liberation Sans" font-size="12" fill="#000">XS</text>
<rect x="822" y="318" width="18" height="15" fill="#00ffff"/><text x="822.5" y="329.5" font-family="Liberation Sans" font-size="12" fill="#000">XN</text>
</svg>
<div class="r" style="left:0px;top:0px;width:1725px;height:1px;background:#a0a0a0"></div>
<div class="r" style="left:0px;top:1px;width:1724px;height:1px;background:#696969"></div>
<div class="r" style="left:1723px;top:1px;width:1px;height:592px;background:#e3e3e3"></div>
<div class="r" style="left:1724px;top:0px;width:1px;height:594px;background:#fff"></div>
<div class="r" style="left:0px;top:592px;width:1724px;height:1px;background:#e3e3e3"></div>
<div class="r" style="left:0px;top:593px;width:1725px;height:1px;background:#fff"></div>
<div class="r" style="left:0px;top:594px;width:1728px;height:1px;background:#a0a0a0"></div>
<div class="r" style="left:0px;top:595px;width:1728px;height:1px;background:#696969"></div>
<div class="r" style="left:0px;top:596px;width:1728px;height:18px;background:#fff"></div>
<div class="r" style="left:0px;top:614px;width:1728px;height:1px;background:#e3e3e3"></div>
<div class="r" style="left:0px;top:615px;width:1728px;height:1px;background:#fff"></div>
<div class="r" style="left:0px;top:616px;width:1728px;height:1px;background:#a0a0a0"></div>
<div class="r" style="left:0px;top:617px;width:1728px;height:1px;background:#696969"></div>
<div class="t" style="left:0.0px;top:597.7px;color:#000;letter-spacing:-0.27px">PanNr.=8 gamma=0,02525935 Ca=0,78935478</div>
<div class="gb" style="left:-2px;top:625px;width:344px;height:92px"></div>
<div class="t" style="left:4.0px;top:618.7px;color:#000;background:#f0f0f0;padding:0 2px">2D</div>
<div class="r" style="left:103px;top:620px;width:22px;height:8px;background:#f0f0f0"></div>
<div class="cb" style="left:103px;top:628px;width:12px;height:12px"><svg width="9" height="9" style="position:absolute;left:1px;top:1px"><path d="M1 4 L3.5 6.5 L8 1.5" stroke="#000" stroke-width="2" fill="none"/></svg></div>
<div class="bt" style="left:0px;top:641px;width:25px;height:24px;"><svg class="ic" style="left:0px;top:0px" width="22" height="22"><path d="M3 14.5 V10.5 L11 6.5 L19 10.5 V14.5 Z" stroke="#000" stroke-width="1.2" fill="none"/></svg></div>
<div class="bs" style="left:25px;top:641px;width:24px;height:24px;"><svg class="ic" style="left:0px;top:0px" width="22" height="22"><path d="M2 15.5 H16 M4 15 L16 9 M15 5 L16 18 M13 5 L17 6 M13 19 L15 17 L17 19" stroke="#000" stroke-width="1.2" fill="none"/></svg></div>
<div class="bs" style="left:50px;top:641px;width:24px;height:24px;"><div style="position:absolute;left:0;right:0;top:5px;color:#000;font-size:12px;text-align:center">XD</div></div>
<div class="bs" style="left:75px;top:641px;width:24px;height:24px;"><svg class="ic" style="left:0px;top:0px" width="22" height="22"><path d="M4 8 L5 7 C7 6.5 8.5 8 10.2 12 M16 7 H15 C13 7.5 11.5 9 10.6 12" stroke="#f00" stroke-width="1.6" fill="none"/><path d="M10.5 11.5 V15.5" stroke="#f00" stroke-width="2.6"/></svg></div>
<div class="bs" style="left:100px;top:641px;width:24px;height:24px;"><div style="position:absolute;left:0;right:0;top:5px;color:#008000;font-size:12px;text-align:center">ca</div></div>
<div class="bt" style="left:125px;top:641px;width:24px;height:24px;"><div style="position:absolute;left:0;right:0;top:5px;color:#800080;font-size:12px;text-align:center">cwi</div></div>
<div class="bt" style="left:150px;top:641px;width:25px;height:24px;"><div style="position:absolute;left:0;right:0;top:5px;color:#800000;font-size:12px;text-align:center">ai</div></div>
<div class="bs" style="left:0px;top:666px;width:23px;height:24px;"><svg class="ic" style="left:0px;top:0px" width="22" height="22"><path d="M2 15 V10 L10 7 L18 10 V15 Z M2 12.5 H18 M6 9 V15 M10 7 V15 M14 9 V15" stroke="#000" stroke-width="1.2" fill="none"/></svg></div>
<div class="bs" style="left:50px;top:666px;width:24px;height:24px;"><div style="position:absolute;left:0;right:0;top:5px;color:#000;font-size:12px;text-align:center">XS</div></div>
<div class="bs" style="left:75px;top:666px;width:24px;height:24px;"><svg class="ic" style="left:0px;top:-4px" width="22" height="22"><path d="M4 8 L5 7 C7 6.5 8.5 8 10.2 12 M16 7 H15 C13 7.5 11.5 9 10.6 12" stroke="#f00" stroke-width="1.6" fill="none"/><path d="M10.5 11.5 V15.5" stroke="#f00" stroke-width="2.6"/></svg><svg class="ic" style="left:0px;top:0px" width="22" height="22"><path d="M6 14 L10 21 L14 14" stroke="#000" stroke-width="1.6" fill="none"/></svg></div>
<div class="cb" style="left:100px;top:672px;width:12px;height:12px"></div>
<div class="bt" style="left:125px;top:666px;width:24px;height:24px;"><div style="position:absolute;left:0;right:0;top:5px;color:#800080;font-size:12px;text-align:center">cwv</div></div>
<div class="bt" style="left:150px;top:666px;width:25px;height:24px;"><div style="position:absolute;left:0;right:0;top:5px;color:#0000ff;font-size:12px;text-align:center">Re</div></div>
<div class="bs" style="left:0px;top:692px;width:24px;height:24px;"><svg class="ic" style="left:0px;top:0px" width="22" height="22"><path d="M2.5 9.5 C5 6 8 4.5 11 4.5 C14 4.5 17 6 19.5 9.5 H2.5 Z" stroke="#0000ff" stroke-width="1.3" fill="none"/><path d="M11 4 V19" stroke="#808080" stroke-width="1.3"/><rect x="6.5" y="15.5" width="9" height="2.5" fill="none" stroke="#909090" stroke-width="1.2"/></svg></div>
<div class="bs" style="left:50px;top:692px;width:24px;height:24px;"><div style="position:absolute;left:0;right:0;top:5px;color:#000;font-size:12px;text-align:center">XN</div></div>
<div class="bt" style="left:75px;top:692px;width:24px;height:25px;"><svg class="ic" style="left:0px;top:-4px" width="22" height="22"><path d="M4 8 L5 7 C7 6.5 8.5 8 10.2 12 M16 7 H15 C13 7.5 11.5 9 10.6 12" stroke="#f00" stroke-width="1.6" fill="none"/><path d="M10.5 11.5 V15.5" stroke="#f00" stroke-width="2.6"/></svg><svg class="ic" style="left:0px;top:0px" width="22" height="24"><rect x="7.8" y="14.8" width="4.6" height="7.6" rx="1" stroke="#000" stroke-width="1.6" fill="none"/></svg></div>
<div class="bt" style="left:100px;top:692px;width:25px;height:24px;"><div style="position:absolute;left:0;right:0;top:5px;color:#000;font-size:12px;text-align:center">BL</div></div>
<div class="bt" style="left:125px;top:692px;width:24px;height:24px;"><div style="position:absolute;left:0;right:0;top:5px;color:#800080;font-size:12px;text-align:center">cwg</div></div>
<div class="t" style="left:180.0px;top:635.7px;color:#000;">Pos.Y [m]</div>
<div class="ed" style="left:179px;top:649px;width:59px;height:20px"><span style="position:absolute;left:2px;top:2px;color:#000">-2,45067</span></div>
<div class="bt" style="left:240px;top:649px;width:15px;height:10px;"><svg class="au" style="left:3px;top:2px" width="7" height="4"><path d="M3 0h1v1h-1z M2 1h3v1h-3z M1 2h5v1h-5z M0 3h7v1h-7z" fill="#000"/></svg></div><div class="bt" style="left:240px;top:659px;width:15px;height:10px;"><svg class="ad" style="left:3px;top:3px" width="7" height="4"><path d="M0 0h7v1h-7z M1 1h5v1h-5z M2 2h3v1h-3z M3 3h1v1h-1z" fill="#000"/></svg></div>
<div class="bt" style="left:207px;top:687px;width:24px;height:24px;"><svg class="ic" style="left:0px;top:0px" width="22" height="22"><path d="M3.5 3.5 H10 L13.5 7 V13.5 H3.5 Z" fill="#fff" stroke="#000" shape-rendering="crispEdges"/><path d="M5 6.5 H9 M5 8.5 H12 M5 10.5 H8 M9 10.5 H12" stroke="#000" shape-rendering="crispEdges"/><path d="M10.5 12.5 V18.5 M18.5 12.5 V18.5" stroke="#ffe000" stroke-width="1.2" shape-rendering="crispEdges"/><rect x="11" y="12" width="7" height="7" fill="#fff"/><path d="M10.5 11.5 V18.5 M18.5 11.5 V18.5" stroke="#e8d800" stroke-width="1.3"/><path d="M13 11.5 H15.5 V15 H17.5" stroke="#000" fill="none"/><path d="M14 3 V8 M11.5 6.5 L14 10.5 L16.5 6.5 Z" stroke="#f00" stroke-width="2" fill="#f00"/></svg></div>
<div class="bt" style="left:231px;top:687px;width:25px;height:24px;"><svg class="ic" style="left:0px;top:0px" width="22" height="22"><rect x="4" y="4" width="14" height="14" fill="#0000d0" rx="1.5"/><rect x="6" y="5" width="10" height="6" fill="#fff"/><rect x="7" y="14" width="8" height="4" fill="#c8c8c8"/><rect x="8.5" y="15" width="2" height="3" fill="#0000d0"/></svg></div>
<div class="r" style="left:264px;top:635px;width:1px;height:81px;background:#a0a0a0"></div><div class="r" style="left:265px;top:635px;width:1px;height:81px;background:#fff"></div>
<div class="bt" style="left:291px;top:635px;width:18px;height:15px;"><svg style="position:absolute;left:2px;top:4px" width="9" height="5"><path d="M0 5 H9 L4.5 0 Z" fill="#000"/></svg></div>
<div class="bt" style="left:272px;top:648px;width:18px;height:15px;"><svg style="position:absolute;left:3px;top:3px" width="5" height="9"><path d="M5 0 V9 L0 4.5 Z" fill="#000"/></svg></div>
<div class="bt" style="left:311px;top:648px;width:18px;height:15px;"><svg style="position:absolute;left:4px;top:3px" width="5" height="9"><path d="M0 0 V9 L5 4.5 Z" fill="#000"/></svg></div>
<div class="bt" style="left:291px;top:659px;width:18px;height:16px;"><svg style="position:absolute;left:2px;top:5px" width="9" height="5"><path d="M0 0 H9 L4.5 5 Z" fill="#000"/></svg></div>
<div class="bt" style="left:267px;top:679px;width:19px;height:18px;"><svg class="ic" style="left:0px;top:0px" width="19" height="18"><circle cx="7" cy="7" r="5" fill="#fff" stroke="#000" stroke-width="1.5"/><path d="M10.5 10.5 L15 15" stroke="#0060ff" stroke-width="2.5"/><path d="M4.5 7 H9.5 M7 4.5 V9.5" stroke="#000" stroke-width="1.6"/></svg></div>
<div class="bt" style="left:291px;top:679px;width:19px;height:18px;"><svg class="ic" style="left:0px;top:0px" width="19" height="18"><circle cx="7" cy="7" r="5" fill="#fff" stroke="#000" stroke-width="1.5"/><path d="M10.5 10.5 L15 15" stroke="#0060ff" stroke-width="2.5"/><text x="3.5" y="9" font-size="6" font-family="Liberation Sans">1:1</text></svg></div>
<div class="bt" style="left:315px;top:679px;width:19px;height:18px;"><svg class="ic" style="left:0px;top:0px" width="19" height="18"><circle cx="7" cy="7" r="5" fill="#fff" stroke="#000" stroke-width="1.5"/><path d="M10.5 10.5 L15 15" stroke="#0060ff" stroke-width="2.5"/><path d="M4.5 7 H9.5" stroke="#000" stroke-width="1.6"/></svg></div>
<div class="cb" style="left:267px;top:703px;width:12px;height:12px"></div>
<div class="t" style="left:285.0px;top:700.7px;color:#000;">alle Flügel</div>
<div class="bt" style="left:348px;top:625px;width:84px;height:20px;"><div style="position:absolute;left:0;right:0;top:2px;color:#000;font-size:11px;text-align:center">Profilschnitt</div></div>
<div class="bt" style="left:348px;top:646px;width:84px;height:20px;"><div style="position:absolute;left:0;right:0;top:2px;color:#000;font-size:11px;text-align:center">NP verschieben</div></div>
<div class="bt" style="left:348px;top:667px;width:84px;height:20px;"><div style="position:absolute;left:0;right:0;top:2px;color:#000;font-size:11px;text-align:center">K-G-M</div></div>
<div class="t" style="left:435.0px;top:619.0px;color:#000;">Sichtbar / unsichtbar</div>
<div class="t" style="left:549.0px;top:619.0px;color:#000;">Aktuelle Fläche</div>
<div class="ed" style="left:435px;top:631px;width:229px;height:63px"></div>
<div class="cb" style="left:440px;top:636px;width:12px;height:12px"><svg width="9" height="9" style="position:absolute;left:1px;top:1px"><path d="M1 4 L3.5 6.5 L8 1.5" stroke="#000" stroke-width="2" fill="none"/></svg></div>
<div class="t" style="left:460.0px;top:633.7px;color:#000;">0) SLW01</div>
<div class="r" style="left:458px;top:649px;width:205px;height:17px;background:#0078d7"></div>
<div class="cb" style="left:440px;top:653px;width:12px;height:12px"><svg width="9" height="9" style="position:absolute;left:1px;top:1px"><path d="M1 4 L3.5 6.5 L8 1.5" stroke="#000" stroke-width="2" fill="none"/></svg></div>
<div class="t" style="left:460.0px;top:650.7px;color:#fff;">1) 1st</div>
<div class="cb" style="left:440px;top:669px;width:12px;height:12px"><svg width="9" height="9" style="position:absolute;left:1px;top:1px"><path d="M1 4 L3.5 6.5 L8 1.5" stroke="#000" stroke-width="2" fill="none"/></svg></div>
<div class="t" style="left:460.0px;top:667.7px;color:#000;">2) Höhe</div>
<div class="bt" style="left:476px;top:699px;width:69px;height:19px;"><div style="position:absolute;left:0;right:0;top:2px;color:#000;font-size:11px;text-align:center">Undo</div></div>
<div class="bt" style="left:555px;top:699px;width:70px;height:19px;"><div style="position:absolute;left:0;right:0;top:2px;color:#a0a0a0;font-size:11px;text-align:center">Redo</div></div>
<div class="gb" style="left:667px;top:625px;width:345px;height:92px"></div>
<div class="t" style="left:674.0px;top:618.7px;color:#000;background:#f0f0f0;padding:0 2px">3D</div>
<div class="bs" style="left:669px;top:635px;width:24px;height:24px;"><svg class="ic" style="left:0px;top:0px" width="22" height="22"><path d="M2.5 14.5 L6.5 10.5" stroke="#000" stroke-width="3"/><path d="M2.5 14.5 L6.5 10.5" stroke="#fff" stroke-width="1"/><path d="M5.5 7.5 L9.5 11.5" stroke="#808000" stroke-width="4.2"/><path d="M7 5 L11.5 9.5" stroke="#0000ff" stroke-width="1.2"/><circle cx="10.6" cy="5.2" r="3.2" fill="#f00"/><path d="M13 13 V20 M16 13 V20 M11 14.8 H18 M11 17.8 H18" stroke="#000" stroke-width="1.4"/></svg></div>
<div class="bs" style="left:693px;top:635px;width:24px;height:24px;"><svg class="ic" style="left:0px;top:0px" width="22" height="22"><path d="M1.5 11.5 H19 M1.5 11.5 L4 9 M1.5 11.5 L4 14 M2 19.5 L19 11.8 M8.5 13.5 V17.5 M6.5 19 L8.5 17 L10.5 18" stroke="#000" stroke-width="1.1" fill="none"/><path d="M13.5 8.5 C12 8.5 10.5 5 9 3.5 M13.5 2.5 C12 3 11 8.5 8.5 8.5 C6 8.5 6 2.5 8.5 2.5" stroke="#000" stroke-width="1.3" fill="none"/></svg></div>
<div class="bt" style="left:718px;top:635px;width:25px;height:24px;"><svg class="ic" style="left:0px;top:0px" width="22" height="22"><path d="M1 10.5 L10 5.5 L19.5 11 L10.5 16.5 Z M4 9 L4 12 M4.5 8.5 L10 11.5" stroke="#000" stroke-width="1.1" fill="none"/></svg></div>
<div class="bt" style="left:743px;top:635px;width:25px;height:24px;"><svg class="ic" style="left:0px;top:0px" width="22" height="22"><path d="M1.2 11 L9.7 7 L17.7 10.2 L8.9 15.7 Z" stroke="#000" stroke-width="1.1" fill="none"/><path d="M9.7 11.5 V2.5 M7.5 5 L9.7 2 L12 5" stroke="#000" stroke-width="1.4" fill="none"/></svg></div>
<div class="bs" style="left:768px;top:635px;width:24px;height:24px;"><svg class="ic" style="left:0px;top:0px" width="22" height="22"><path d="M6 10 C6 3.5 17 3.5 17 10 V18" stroke="#f00" stroke-width="2.8" fill="none"/><path d="M2 6 V13.5 H9.5 Z" fill="#f00"/></svg></div>
<div class="bt" style="left:669px;top:661px;width:24px;height:24px;"><svg class="ic" style="left:0px;top:0px" width="22" height="22"><path d="M4.8 5.5 V16.8 M10.7 5.5 V16.8 M4.8 11 H10.7 M13.2 5.5 V16.3 H17.5" stroke="#000" stroke-width="1.3" fill="none"/></svg></div>
<div class="bs" style="left:693px;top:661px;width:24px;height:24px;"><svg class="ic" style="left:0px;top:0px" width="22" height="22"><path d="M2.3 11.8 L11.5 7 L18.8 11 L9.3 16.6 Z" stroke="#000" stroke-width="1.1" fill="none"/><path d="M4.5 12.3 L11.5 8.5 L16.8 11.2 L9.5 15.3 Z" stroke="#f00" stroke-width="1" fill="none" stroke-dasharray="2 1"/><circle cx="10.5" cy="11.8" r="0.6" fill="#f00"/></svg></div>
<div class="bs" style="left:718px;top:661px;width:25px;height:24px;"><svg class="ic" style="left:0px;top:0px" width="22" height="22"><path d="M3 16 L9 8.5 M6.5 18 L13 10" stroke="#f00" stroke-width="1.4"/><circle cx="12.8" cy="6.5" r="3.4" fill="none" stroke="#f00" stroke-width="1.5"/><circle cx="10" cy="10.5" r="2.8" fill="none" stroke="#f00" stroke-width="1.5"/><circle cx="7" cy="13.5" r="2.3" fill="none" stroke="#f00" stroke-width="1.5"/><circle cx="4.5" cy="16.2" r="1.9" fill="none" stroke="#f00" stroke-width="1.5"/></svg></div>
<div class="bt" style="left:743px;top:661px;width:25px;height:24px;"><svg class="ic" style="left:0px;top:0px" width="22" height="22"><path d="M1.2 11.1 L9.7 7 L17.7 10.7 L8.6 15.5 Z" stroke="#000" stroke-width="1.1" fill="none"/><path d="M9.3 10.7 L17 3.4 M13.5 3.4 H17 V6.8" stroke="#f00" stroke-width="1.1" fill="none"/></svg></div>
<div class="bs" style="left:768px;top:661px;width:24px;height:24px;"><div style="position:absolute;left:0;right:0;top:5px;color:#000;font-size:12px;text-align:center">Vol</div></div>
<div class="bs" style="left:669px;top:687px;width:24px;height:24px;"><div style="position:absolute;left:0;right:0;top:5px;color:#000;font-size:12px;text-align:center">ZP</div></div>
<div class="bt" style="left:693px;top:687px;width:24px;height:24px;"><div style="position:absolute;left:0;right:0;top:5px;color:#000;font-size:12px;text-align:center">L</div></div>
<div class="bt" style="left:717px;top:687px;width:31px;height:24px;"><div style="position:absolute;left:0;right:0;top:5px;color:#000;font-size:12px;text-align:center">Achs</div></div>
<div class="cb" style="left:813px;top:670px;width:12px;height:12px"><svg width="9" height="9" style="position:absolute;left:1px;top:1px"><path d="M1 4 L3.5 6.5 L8 1.5" stroke="#000" stroke-width="2" fill="none"/></svg></div>
<div class="t" style="left:831.0px;top:669.2px;color:#000;">Durchdringungspunkte anzeigen</div>
<div class="cb" style="left:813px;top:694px;width:12px;height:12px"></div>
<div class="t" style="left:831.0px;top:693.7px;color:#000;">Symmetrie Check</div>
<div class="bt" style="left:944px;top:687px;width:24px;height:24px;"><svg class="ic" style="left:0px;top:0px" width="22" height="22"><path d="M3.5 3.5 H10 L13.5 7 V13.5 H3.5 Z" fill="#fff" stroke="#000" shape-rendering="crispEdges"/><path d="M5 6.5 H9 M5 8.5 H12 M5 10.5 H8 M9 10.5 H12" stroke="#000" shape-rendering="crispEdges"/><path d="M10.5 12.5 V18.5 M18.5 12.5 V18.5" stroke="#ffe000" stroke-width="1.2" shape-rendering="crispEdges"/><rect x="11" y="12" width="7" height="7" fill="#fff"/><path d="M10.5 11.5 V18.5 M18.5 11.5 V18.5" stroke="#e8d800" stroke-width="1.3"/><path d="M13 11.5 H15.5 V15 H17.5" stroke="#000" fill="none"/><path d="M14 3 V8 M11.5 6.5 L14 10.5 L16.5 6.5 Z" stroke="#f00" stroke-width="2" fill="#f00"/></svg></div>
<div class="bt" style="left:968px;top:687px;width:25px;height:24px;"><svg class="ic" style="left:0px;top:0px" width="22" height="22"><rect x="4" y="4" width="14" height="14" fill="#0000d0" rx="1.5"/><rect x="6" y="5" width="10" height="6" fill="#fff"/><rect x="7" y="14" width="8" height="4" fill="#c8c8c8"/><rect x="8.5" y="15" width="2" height="3" fill="#0000d0"/></svg></div>
<div class="r" style="left:0px;top:720px;width:1728px;height:1px;background:#a0a0a0"></div>
<div class="r" style="left:0px;top:721px;width:1728px;height:1px;background:#fff"></div>
<div class="r" style="left:0px;top:744px;width:1728px;height:1px;background:#fff"></div>
<div class="r" style="left:-1px;top:726px;width:51px;height:19px;border-top:1px solid #fff;border-left:1px solid #fff;border-right:1px solid #696969;box-shadow:inset -1px 0 #a0a0a0"></div><div class="t" style="left:1.5px;top:728.7px;color:#000;">Flugzeug</div>
<div class="r" style="left:51px;top:726px;width:41px;height:19px;border-top:1px solid #fff;border-left:1px solid #fff;border-right:1px solid #fff"></div><div class="t" style="left:57.0px;top:728.7px;color:#000;">Flügel</div>
<div class="r" style="left:222px;top:726px;width:139px;height:19px;border-top:1px solid #fff;border-left:1px solid #fff;border-right:1px solid #696969;box-shadow:inset -1px 0 #a0a0a0"></div><div class="t" style="left:227.0px;top:728.2px;color:#000;">Gesamtpolaren berechnen</div>
<div class="r" style="left:92px;top:724px;width:131px;height:21px;background:#f0f0f0"></div>
<div class="r" style="left:92px;top:724px;width:131px;height:21px;border-top:1px solid #fff;border-left:1px solid #fff;border-right:1px solid #696969;box-shadow:inset -1px 0 #a0a0a0"></div><div class="t" style="left:99.0px;top:727.2px;color:#000;">Auslegungsberechnung</div>
<div class="gb" style="left:0px;top:753px;width:1015px;height:203px"></div>
<div class="t" style="left:7.4px;top:746.7px;color:#000;background:#f0f0f0;padding:0 2px">Auslegungsberechnung für den stationären Flug</div>
<svg class="r" style="left:8px;top:767px" width="12" height="12"><path d="M10.2 1.8 A6 6 0 0 0 1.8 10.2" stroke="#a0a0a0" fill="none"/><path d="M1.8 10.2 A6 6 0 0 0 10.2 1.8" stroke="#fff" fill="none"/><circle cx="6" cy="6" r="4.5" fill="#fff"/><path d="M9 2.5 A4.6 4.6 0 0 0 2.5 9" stroke="#696969" fill="none"/></svg>
<div class="ed" style="left:25px;top:764px;width:59px;height:20px"><span style="position:absolute;left:2px;top:2px;color:#000">7,97923</span></div>
<div class="bt" style="left:86px;top:764px;width:15px;height:10px;"><svg class="au" style="left:3px;top:2px" width="7" height="4"><path d="M3 0h1v1h-1z M2 1h3v1h-3z M1 2h5v1h-5z M0 3h7v1h-7z" fill="#000"/></svg></div><div class="bt" style="left:86px;top:774px;width:15px;height:10px;"><svg class="ad" style="left:3px;top:3px" width="7" height="4"><path d="M0 0h7v1h-7z M1 1h5v1h-5z M2 2h3v1h-3z M3 3h1v1h-1z" fill="#000"/></svg></div>
<div class="t" style="left:104.0px;top:763.7px;color:#000;">Anstellwinkel [°]</div>
<div class="ed" style="left:240px;top:764px;width:59px;height:20px"><span style="position:absolute;left:2px;top:2px;color:#000">0,00000</span></div>
<div class="bt" style="left:301px;top:764px;width:15px;height:10px;"><svg class="au" style="left:3px;top:2px" width="7" height="4"><path d="M3 0h1v1h-1z M2 1h3v1h-3z M1 2h5v1h-5z M0 3h7v1h-7z" fill="#000"/></svg></div><div class="bt" style="left:301px;top:774px;width:15px;height:10px;"><svg class="ad" style="left:3px;top:3px" width="7" height="4"><path d="M0 0h7v1h-7z M1 1h5v1h-5z M2 2h3v1h-3z M3 3h1v1h-1z" fill="#000"/></svg></div>
<div class="t" style="left:318.0px;top:763.7px;color:#000;">Schiebewinkel [°]</div>
<svg class="r" style="left:8px;top:789px" width="12" height="12"><path d="M10.2 1.8 A6 6 0 0 0 1.8 10.2" stroke="#a0a0a0" fill="none"/><path d="M1.8 10.2 A6 6 0 0 0 10.2 1.8" stroke="#fff" fill="none"/><circle cx="6" cy="6" r="4.5" fill="#fff"/><path d="M9 2.5 A4.6 4.6 0 0 0 2.5 9" stroke="#696969" fill="none"/></svg>
<div class="ed" style="left:25px;top:786px;width:59px;height:20px"><span style="position:absolute;left:2px;top:2px;color:#000">1,19138</span></div>
<div class="bt" style="left:86px;top:786px;width:15px;height:10px;"><svg class="au" style="left:3px;top:2px" width="7" height="4"><path d="M3 0h1v1h-1z M2 1h3v1h-3z M1 2h5v1h-5z M0 3h7v1h-7z" fill="#000"/></svg></div><div class="bt" style="left:86px;top:796px;width:15px;height:10px;"><svg class="ad" style="left:3px;top:3px" width="7" height="4"><path d="M0 0h7v1h-7z M1 1h5v1h-5z M2 2h3v1h-3z M3 3h1v1h-1z" fill="#000"/></svg></div>
<div class="t" style="left:104.0px;top:785.7px;color:#000;">Auslegungs-Ca</div>
<div class="ed" style="left:240px;top:786px;width:59px;height:20px"><span style="position:absolute;left:2px;top:2px;color:#000">1,16511</span></div>
<div class="bt" style="left:301px;top:786px;width:15px;height:10px;"><svg class="au" style="left:3px;top:2px" width="7" height="4"><path d="M3 0h1v1h-1z M2 1h3v1h-3z M1 2h5v1h-5z M0 3h7v1h-7z" fill="#000"/></svg></div><div class="bt" style="left:301px;top:796px;width:15px;height:10px;"><svg class="ad" style="left:3px;top:3px" width="7" height="4"><path d="M0 0h7v1h-7z M1 1h5v1h-5z M2 2h3v1h-3z M3 3h1v1h-1z" fill="#000"/></svg></div>
<div class="t" style="left:318.0px;top:785.7px;color:#000;">rho [kg/m^3]</div>
<svg class="r" style="left:8px;top:811px" width="12" height="12"><path d="M10.2 1.8 A6 6 0 0 0 1.8 10.2" stroke="#a0a0a0" fill="none"/><path d="M1.8 10.2 A6 6 0 0 0 10.2 1.8" stroke="#fff" fill="none"/><circle cx="6" cy="6" r="4.5" fill="#fff"/><path d="M9 2.5 A4.6 4.6 0 0 0 2.5 9" stroke="#696969" fill="none"/></svg>
<div class="ed" style="left:25px;top:808px;width:59px;height:20px"><span style="position:absolute;left:2px;top:2px;color:#000">12,07751</span></div>
<div class="bt" style="left:86px;top:808px;width:15px;height:10px;"><svg class="au" style="left:3px;top:2px" width="7" height="4"><path d="M3 0h1v1h-1z M2 1h3v1h-3z M1 2h5v1h-5z M0 3h7v1h-7z" fill="#000"/></svg></div><div class="bt" style="left:86px;top:818px;width:15px;height:10px;"><svg class="ad" style="left:3px;top:3px" width="7" height="4"><path d="M0 0h7v1h-7z M1 1h5v1h-5z M2 2h3v1h-3z M3 3h1v1h-1z" fill="#000"/></svg></div>
<div class="t" style="left:104.0px;top:807.7px;color:#000;">Stabilitätsmaß [%] von l_my</div>
<div class="ed" style="left:240px;top:808px;width:59px;height:20px"><span style="position:absolute;left:2px;top:2px;color:#000">530,00000</span></div>
<div class="bt" style="left:301px;top:808px;width:15px;height:10px;"><svg class="au" style="left:3px;top:2px" width="7" height="4"><path d="M3 0h1v1h-1z M2 1h3v1h-3z M1 2h5v1h-5z M0 3h7v1h-7z" fill="#000"/></svg></div><div class="bt" style="left:301px;top:818px;width:15px;height:10px;"><svg class="ad" style="left:3px;top:3px" width="7" height="4"><path d="M0 0h7v1h-7z M1 1h5v1h-5z M2 2h3v1h-3z M3 3h1v1h-1z" fill="#000"/></svg></div>
<div class="t" style="left:318.0px;top:807.7px;color:#000;">Flughöhe [m]</div>
<svg class="r" style="left:8px;top:833px" width="12" height="12"><path d="M10.2 1.8 A6 6 0 0 0 1.8 10.2" stroke="#a0a0a0" fill="none"/><path d="M1.8 10.2 A6 6 0 0 0 10.2 1.8" stroke="#fff" fill="none"/><circle cx="6" cy="6" r="4.5" fill="#fff"/><path d="M9 2.5 A4.6 4.6 0 0 0 2.5 9" stroke="#696969" fill="none"/><circle cx="6" cy="6" r="2" fill="#000"/></svg>
<div class="ed" style="left:25px;top:830px;width:59px;height:20px"><span style="position:absolute;left:2px;top:2px;color:#000">0,08600</span></div>
<div class="bt" style="left:86px;top:830px;width:15px;height:10px;"><svg class="au" style="left:3px;top:2px" width="7" height="4"><path d="M3 0h1v1h-1z M2 1h3v1h-3z M1 2h5v1h-5z M0 3h7v1h-7z" fill="#000"/></svg></div><div class="bt" style="left:86px;top:840px;width:15px;height:10px;"><svg class="ad" style="left:3px;top:3px" width="7" height="4"><path d="M0 0h7v1h-7z M1 1h5v1h-5z M2 2h3v1h-3z M3 3h1v1h-1z" fill="#000"/></svg></div>
<div class="t" style="left:104.0px;top:829.7px;color:#000;">Schwerpunktlage X [m]</div>
<div class="ed" style="left:240px;top:830px;width:59px;height:20px"><span style="position:absolute;left:2px;top:2px;color:#000">50</span></div>
<div class="bt" style="left:301px;top:830px;width:15px;height:10px;"><svg class="au" style="left:3px;top:2px" width="7" height="4"><path d="M3 0h1v1h-1z M2 1h3v1h-3z M1 2h5v1h-5z M0 3h7v1h-7z" fill="#000"/></svg></div><div class="bt" style="left:301px;top:840px;width:15px;height:10px;"><svg class="ad" style="left:3px;top:3px" width="7" height="4"><path d="M0 0h7v1h-7z M1 1h5v1h-5z M2 2h3v1h-3z M3 3h1v1h-1z" fill="#000"/></svg></div>
<div class="t" style="left:318.0px;top:829.7px;color:#000;">Max. Iteration</div>
<svg class="r" style="left:8px;top:855px" width="12" height="12"><path d="M10.2 1.8 A6 6 0 0 0 1.8 10.2" stroke="#a0a0a0" fill="none"/><path d="M1.8 10.2 A6 6 0 0 0 10.2 1.8" stroke="#fff" fill="none"/><circle cx="6" cy="6" r="4.5" fill="#fff"/><path d="M9 2.5 A4.6 4.6 0 0 0 2.5 9" stroke="#696969" fill="none"/></svg>
<div class="ed" style="left:25px;top:852px;width:59px;height:20px"><span style="position:absolute;left:2px;top:2px;color:#000">10,92863</span></div>
<div class="bt" style="left:86px;top:852px;width:15px;height:10px;"><svg class="au" style="left:3px;top:2px" width="7" height="4"><path d="M3 0h1v1h-1z M2 1h3v1h-3z M1 2h5v1h-5z M0 3h7v1h-7z" fill="#000"/></svg></div><div class="bt" style="left:86px;top:862px;width:15px;height:10px;"><svg class="ad" style="left:3px;top:3px" width="7" height="4"><path d="M0 0h7v1h-7z M1 1h5v1h-5z M2 2h3v1h-3z M3 3h1v1h-1z" fill="#000"/></svg></div>
<div class="t" style="left:104.0px;top:851.7px;color:#000;">Fluggeschwindigkeit [m/s]</div>
<div class="ed" style="left:240px;top:852px;width:59px;height:20px"><span style="position:absolute;left:2px;top:2px;color:#808080">3</span></div>
<div class="t" style="left:318.5px;top:851.7px;color:#000;">Iterationsschritt</div>
<div class="r" style="left:7px;top:877px;width:110px;height:16px;border:1px solid;border-color:#a0a0a0 #fff #fff #a0a0a0"></div>
<div class="bt" style="left:7px;top:897px;width:110px;height:22px;"><div style="position:absolute;left:0;right:0;top:4px;color:#000;font-size:11px;text-align:center">Berechnung starten</div></div>
<div class="bt" style="left:118px;top:897px;width:110px;height:22px;"><div style="position:absolute;left:0;right:0;top:4px;color:#000;font-size:11px;text-align:center">Berechnung Stopp</div></div>
<div class="bt" style="left:234px;top:897px;width:101px;height:22px;"><div style="position:absolute;left:0;right:0;top:4px;color:#000;font-size:11px;text-align:center">Berechnete Werte</div></div>
<div class="ed" style="left:7px;top:927px;width:48px;height:21px"><span style="position:absolute;left:2px;top:3px;color:#000">16</span></div>
<div class="bt" style="left:38px;top:929px;width:16px;height:9px;"><svg style="position:absolute;left:5px;top:3px" width="4" height="2"><path d="M0 2 H4 L2.0 0 Z" fill="#000"/></svg></div>
<div class="bt" style="left:38px;top:938px;width:16px;height:9px;"><svg style="position:absolute;left:5px;top:2px" width="4" height="2"><path d="M0 0 H4 L2.0 2 Z" fill="#000"/></svg></div>
<div class="t" style="left:61.0px;top:927.7px;color:#000;">Anzahl Thread&#x27;s</div>
<div class="r" style="left:411px;top:763px;width:1px;height:184px;background:#a0a0a0"></div><div class="r" style="left:412px;top:763px;width:1px;height:184px;background:#fff"></div>
<div class="ed" style="left:418px;top:763px;width:29px;height:20px"><span style="position:absolute;left:2px;top:2px;color:#000">1</span></div>
<div class="bt" style="left:448px;top:763px;width:15px;height:10px;"><svg class="au" style="left:3px;top:2px" width="7" height="4"><path d="M3 0h1v1h-1z M2 1h3v1h-3z M1 2h5v1h-5z M0 3h7v1h-7z" fill="#000"/></svg></div><div class="bt" style="left:448px;top:773px;width:15px;height:10px;"><svg class="ad" style="left:3px;top:3px" width="7" height="4"><path d="M0 0h7v1h-7z M1 1h5v1h-5z M2 2h3v1h-3z M3 3h1v1h-1z" fill="#000"/></svg></div>
<div class="t" style="left:468.0px;top:763.7px;color:#000;">Anzahl Nachlaufelemente</div>
<div class="ed" style="left:418px;top:786px;width:58px;height:20px"><span style="position:absolute;left:2px;top:2px;color:#000">0,00100</span></div>
<div class="bt" style="left:480px;top:786px;width:15px;height:10px;"><svg class="au" style="left:3px;top:2px" width="7" height="4"><path d="M3 0h1v1h-1z M2 1h3v1h-3z M1 2h5v1h-5z M0 3h7v1h-7z" fill="#000"/></svg></div><div class="bt" style="left:480px;top:796px;width:15px;height:10px;"><svg class="ad" style="left:3px;top:3px" width="7" height="4"><path d="M0 0h7v1h-7z M1 1h5v1h-5z M2 2h3v1h-3z M3 3h1v1h-1z" fill="#000"/></svg></div>
<div class="t" style="left:498.0px;top:785.7px;color:#000;">Gesamtlänge Nachlaufelemente [m]</div>
<div class="cb" style="left:418px;top:811px;width:12px;height:12px"></div>
<div class="t" style="left:436.0px;top:809.7px;color:#000;">Nachlaufkorrektur , Einzelausrichtung</div>
<div class="cb" style="left:418px;top:833px;width:12px;height:12px"></div>
<div class="t" style="left:436.0px;top:831.7px;color:#000;">Nachlaufkorrektur , Komplettausrichtung</div>
<div class="r" style="left:418px;top:853px;width:285px;height:1px;background:#a0a0a0"></div><div class="r" style="left:418px;top:854px;width:285px;height:1px;background:#fff"></div>
<div class="ed" style="left:418px;top:867px;width:54px;height:20px"><span style="position:absolute;left:2px;top:2px;color:#000">37,23874</span></div>
<div class="t" style="left:475.0px;top:867.7px;color:#000;">Gleitzahl E</div>
<div class="ed" style="left:574px;top:867px;width:54px;height:20px"><span style="position:absolute;left:2px;top:2px;color:#000">1,53824</span></div>
<div class="t" style="left:630.0px;top:867.7px;color:#000;">Gleitwinkel [°]</div>
<div class="ed" style="left:418px;top:889px;width:54px;height:20px"><span style="position:absolute;left:2px;top:2px;color:#000">38,88658</span></div>
<div class="t" style="left:475.0px;top:889.7px;color:#000;">Steigzahl epsilon</div>
<div class="ed" style="left:574px;top:889px;width:54px;height:20px"><span style="position:absolute;left:2px;top:2px;color:#000">0,29347</span></div>
<div class="t" style="left:630.0px;top:889.7px;color:#000;">vs [m/s]</div>
<div class="ed" style="left:418px;top:912px;width:54px;height:20px"><span style="position:absolute;left:2px;top:2px;color:#000">2603</span></div>
<div class="t" style="left:475.0px;top:912.7px;color:#000;">Anzahl der Panels</div>
<div class="ed" style="left:574px;top:912px;width:54px;height:20px"><span style="position:absolute;left:2px;top:2px;color:#000">1,94873</span></div>
<div class="t" style="left:630.0px;top:912.7px;color:#000;">W[N]</div>
<div class="r" style="left:710px;top:763px;width:1px;height:184px;background:#a0a0a0"></div><div class="r" style="left:711px;top:763px;width:1px;height:184px;background:#fff"></div>
<div class="gb" style="left:714px;top:770px;width:264px;height:171px"></div>
<div class="t" style="left:721.0px;top:763.7px;color:#000;background:#f0f0f0;padding:0 2px">Einstellungen Widerstandsberechnung</div>
<div class="cb" style="left:720px;top:791px;width:12px;height:12px"></div>
<div class="t" style="left:738.0px;top:790.2px;color:#000;">Profile mit Blasenwiderstand rechnen</div>
<div class="ed" style="left:720px;top:812px;width:58px;height:20px"><span style="position:absolute;left:2px;top:2px;color:#000">0,000000</span></div>
<div class="bt" style="left:782px;top:812px;width:15px;height:10px;"><svg class="au" style="left:3px;top:2px" width="7" height="4"><path d="M3 0h1v1h-1z M2 1h3v1h-3z M1 2h5v1h-5z M0 3h7v1h-7z" fill="#000"/></svg></div><div class="bt" style="left:782px;top:822px;width:15px;height:10px;"><svg class="ad" style="left:3px;top:3px" width="7" height="4"><path d="M0 0h7v1h-7z M1 1h5v1h-5z M2 2h3v1h-3z M3 3h1v1h-1z" fill="#000"/></svg></div>
<div class="t" style="left:800.0px;top:811.7px;color:#000;">Rumpfquerschnittsfläche [m^2]</div>
<div class="ed" style="left:720px;top:835px;width:58px;height:20px"><span style="position:absolute;left:2px;top:2px;color:#000">0,00000</span></div>
<div class="bt" style="left:782px;top:835px;width:15px;height:10px;"><svg class="au" style="left:3px;top:2px" width="7" height="4"><path d="M3 0h1v1h-1z M2 1h3v1h-3z M1 2h5v1h-5z M0 3h7v1h-7z" fill="#000"/></svg></div><div class="bt" style="left:782px;top:845px;width:15px;height:10px;"><svg class="ad" style="left:3px;top:3px" width="7" height="4"><path d="M0 0h7v1h-7z M1 1h5v1h-5z M2 2h3v1h-3z M3 3h1v1h-1z" fill="#000"/></svg></div>
<div class="t" style="left:800.0px;top:834.7px;color:#000;">Cw_rumpf</div>
<div class="ed" style="left:720px;top:857px;width:58px;height:20px"><span style="position:absolute;left:2px;top:2px;color:#000">0,00000</span></div>
<div class="bt" style="left:782px;top:857px;width:15px;height:10px;"><svg class="au" style="left:3px;top:2px" width="7" height="4"><path d="M3 0h1v1h-1z M2 1h3v1h-3z M1 2h5v1h-5z M0 3h7v1h-7z" fill="#000"/></svg></div><div class="bt" style="left:782px;top:867px;width:15px;height:10px;"><svg class="ad" style="left:3px;top:3px" width="7" height="4"><path d="M0 0h7v1h-7z M1 1h5v1h-5z M2 2h3v1h-3z M3 3h1v1h-1z" fill="#000"/></svg></div>
<div class="t" style="left:800.0px;top:856.7px;color:#000;">Interferenzwiderstand Cw_int</div>
<div class="r" style="left:0px;top:962px;width:1728px;height:1px;background:#a0a0a0"></div>
<div class="r" style="left:0px;top:963px;width:1728px;height:1px;background:#696969"></div>
<div class="r" style="left:0px;top:964px;width:1728px;height:1px;background:#fff"></div></body></html>
